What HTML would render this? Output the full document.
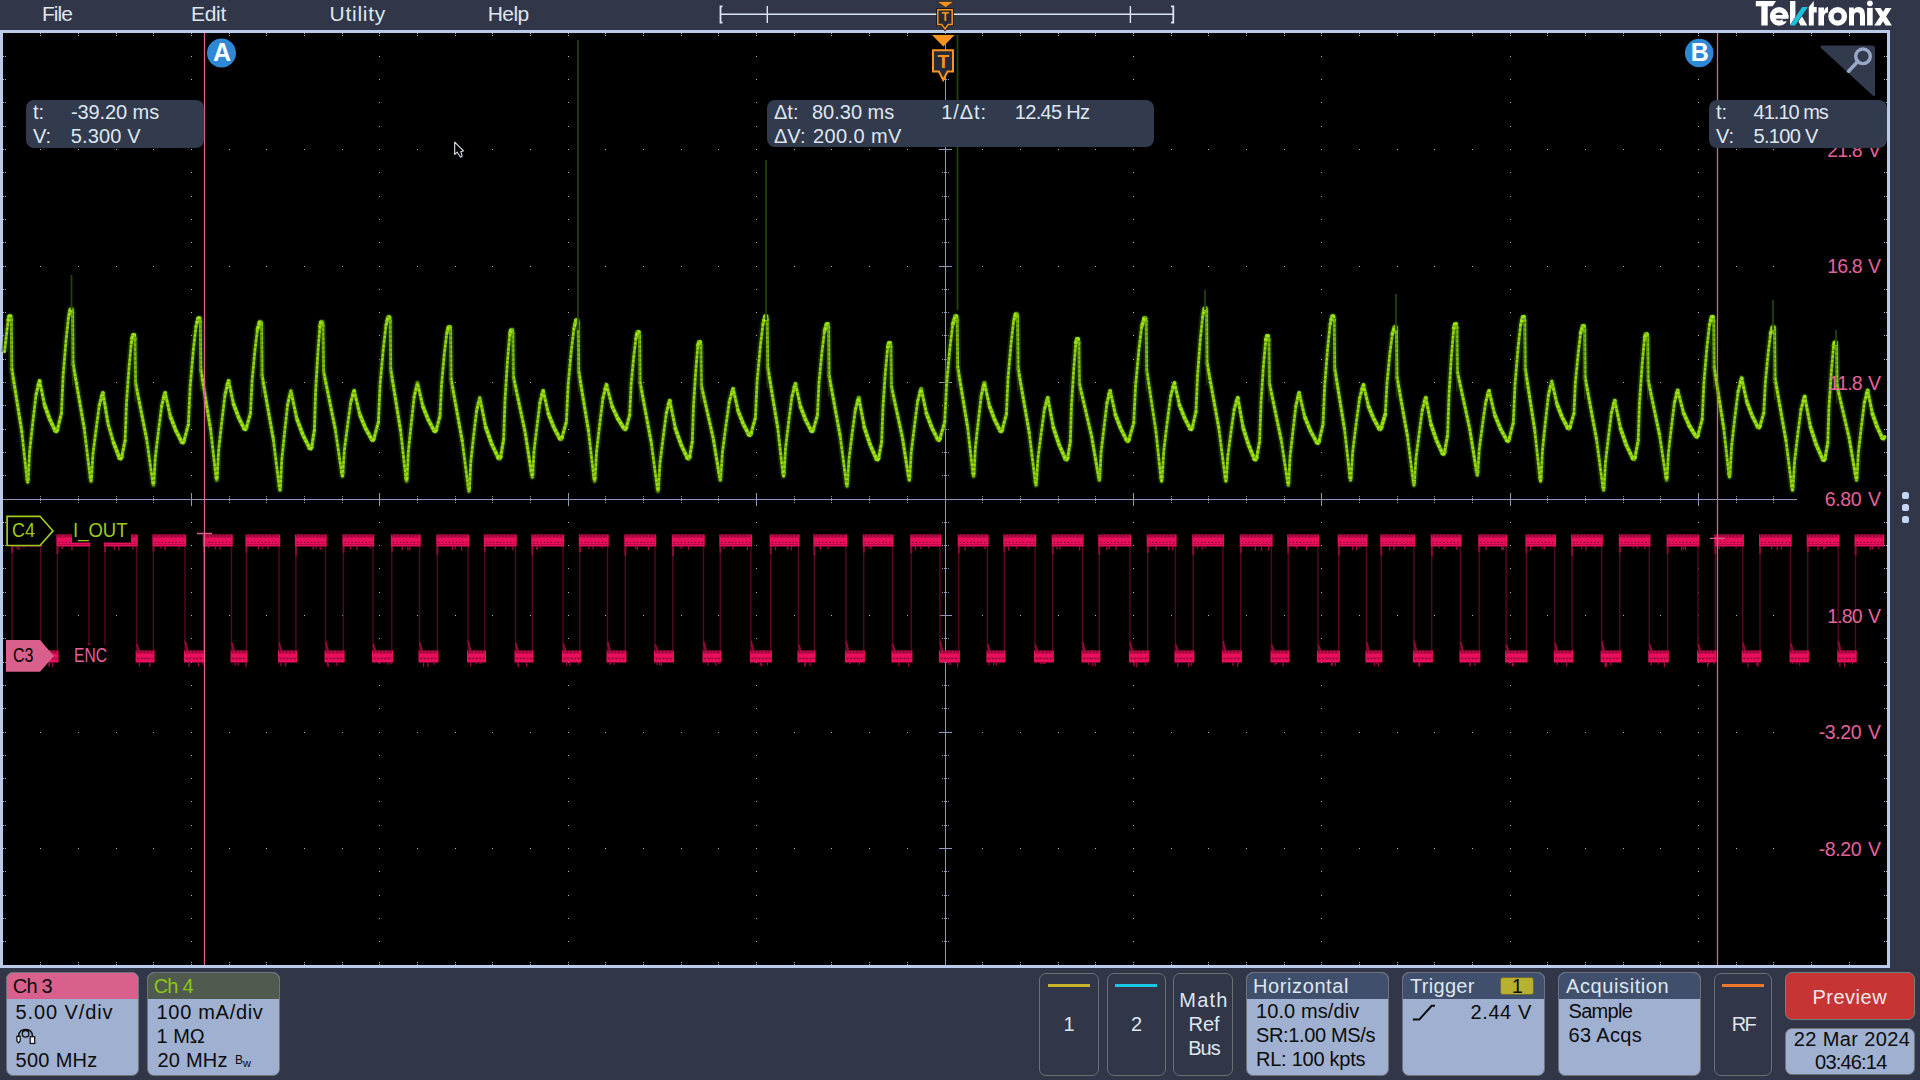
<!DOCTYPE html>
<html><head><meta charset="utf-8">
<style>
html,body{margin:0;padding:0;}
body{width:1920px;height:1080px;overflow:hidden;background:#313748;position:relative;font-family:"Liberation Sans", sans-serif;}
.t{position:absolute;white-space:pre;}
.abs{position:absolute;}
svg{position:absolute;left:0;top:0;}
</style></head><body>
<div class="abs" style="left:0;top:30px;width:1890px;height:938px;background:#b9cbe9;"></div>
<div class="abs" style="left:3px;top:33px;width:1884px;height:932px;background:#000;"></div>
<svg width="1920" height="1080" viewBox="0 0 1920 1080">
<path d="M3 56h1v1h-1zM3 79h1v1h-1zM3 102h1v1h-1zM3 126h1v1h-1zM3 149h1v1h-1zM3 172h1v1h-1zM3 196h1v1h-1zM3 219h1v1h-1zM3 242h1v1h-1zM3 266h1v1h-1zM3 289h1v1h-1zM3 312h1v1h-1zM3 335h1v1h-1zM3 359h1v1h-1zM3 382h1v1h-1zM3 405h1v1h-1zM3 429h1v1h-1zM3 452h1v1h-1zM3 475h1v1h-1zM3 499h1v1h-1zM3 522h1v1h-1zM3 545h1v1h-1zM3 568h1v1h-1zM3 592h1v1h-1zM3 615h1v1h-1zM3 638h1v1h-1zM3 662h1v1h-1zM3 685h1v1h-1zM3 708h1v1h-1zM3 732h1v1h-1zM3 755h1v1h-1zM3 778h1v1h-1zM3 801h1v1h-1zM3 825h1v1h-1zM3 848h1v1h-1zM3 871h1v1h-1zM3 895h1v1h-1zM3 918h1v1h-1zM3 941h1v1h-1zM5 56h1v1h-1zM5 79h1v1h-1zM5 102h1v1h-1zM5 126h1v1h-1zM5 149h1v1h-1zM5 172h1v1h-1zM5 196h1v1h-1zM5 219h1v1h-1zM5 242h1v1h-1zM5 266h1v1h-1zM5 289h1v1h-1zM5 312h1v1h-1zM5 335h1v1h-1zM5 359h1v1h-1zM5 382h1v1h-1zM5 405h1v1h-1zM5 429h1v1h-1zM5 452h1v1h-1zM5 475h1v1h-1zM5 499h1v1h-1zM5 522h1v1h-1zM5 545h1v1h-1zM5 568h1v1h-1zM5 592h1v1h-1zM5 615h1v1h-1zM5 638h1v1h-1zM5 662h1v1h-1zM5 685h1v1h-1zM5 708h1v1h-1zM5 732h1v1h-1zM5 755h1v1h-1zM5 778h1v1h-1zM5 801h1v1h-1zM5 825h1v1h-1zM5 848h1v1h-1zM5 871h1v1h-1zM5 895h1v1h-1zM5 918h1v1h-1zM5 941h1v1h-1zM40 33h1v1h-1zM40 35h1v1h-1zM40 149h1v1h-1zM40 266h1v1h-1zM40 382h1v1h-1zM40 615h1v1h-1zM40 732h1v1h-1zM40 848h1v1h-1zM40 962h1v1h-1zM40 964h1v1h-1zM78 33h1v1h-1zM78 35h1v1h-1zM78 149h1v1h-1zM78 266h1v1h-1zM78 382h1v1h-1zM78 615h1v1h-1zM78 732h1v1h-1zM78 848h1v1h-1zM78 962h1v1h-1zM78 964h1v1h-1zM116 33h1v1h-1zM116 35h1v1h-1zM116 149h1v1h-1zM116 266h1v1h-1zM116 382h1v1h-1zM116 615h1v1h-1zM116 732h1v1h-1zM116 848h1v1h-1zM116 962h1v1h-1zM116 964h1v1h-1zM153 33h1v1h-1zM153 35h1v1h-1zM153 149h1v1h-1zM153 266h1v1h-1zM153 382h1v1h-1zM153 615h1v1h-1zM153 732h1v1h-1zM153 848h1v1h-1zM153 962h1v1h-1zM153 964h1v1h-1zM191 33h1v1h-1zM191 35h1v1h-1zM191 56h1v1h-1zM191 79h1v1h-1zM191 102h1v1h-1zM191 126h1v1h-1zM191 149h1v1h-1zM191 172h1v1h-1zM191 196h1v1h-1zM191 219h1v1h-1zM191 242h1v1h-1zM191 266h1v1h-1zM191 289h1v1h-1zM191 312h1v1h-1zM191 335h1v1h-1zM191 359h1v1h-1zM191 382h1v1h-1zM191 405h1v1h-1zM191 429h1v1h-1zM191 452h1v1h-1zM191 475h1v1h-1zM191 499h1v1h-1zM191 522h1v1h-1zM191 545h1v1h-1zM191 568h1v1h-1zM191 592h1v1h-1zM191 615h1v1h-1zM191 638h1v1h-1zM191 662h1v1h-1zM191 685h1v1h-1zM191 708h1v1h-1zM191 732h1v1h-1zM191 755h1v1h-1zM191 778h1v1h-1zM191 801h1v1h-1zM191 825h1v1h-1zM191 848h1v1h-1zM191 871h1v1h-1zM191 895h1v1h-1zM191 918h1v1h-1zM191 941h1v1h-1zM191 962h1v1h-1zM191 964h1v1h-1zM191 965h1v1h-1zM229 33h1v1h-1zM229 35h1v1h-1zM229 149h1v1h-1zM229 266h1v1h-1zM229 382h1v1h-1zM229 615h1v1h-1zM229 732h1v1h-1zM229 848h1v1h-1zM229 962h1v1h-1zM229 964h1v1h-1zM266 33h1v1h-1zM266 35h1v1h-1zM266 149h1v1h-1zM266 266h1v1h-1zM266 382h1v1h-1zM266 615h1v1h-1zM266 732h1v1h-1zM266 848h1v1h-1zM266 962h1v1h-1zM266 964h1v1h-1zM304 33h1v1h-1zM304 35h1v1h-1zM304 149h1v1h-1zM304 266h1v1h-1zM304 382h1v1h-1zM304 615h1v1h-1zM304 732h1v1h-1zM304 848h1v1h-1zM304 962h1v1h-1zM304 964h1v1h-1zM342 33h1v1h-1zM342 35h1v1h-1zM342 149h1v1h-1zM342 266h1v1h-1zM342 382h1v1h-1zM342 615h1v1h-1zM342 732h1v1h-1zM342 848h1v1h-1zM342 962h1v1h-1zM342 964h1v1h-1zM379 33h1v1h-1zM379 35h1v1h-1zM379 56h1v1h-1zM379 79h1v1h-1zM379 102h1v1h-1zM379 126h1v1h-1zM379 149h1v1h-1zM379 172h1v1h-1zM379 196h1v1h-1zM379 219h1v1h-1zM379 242h1v1h-1zM379 266h1v1h-1zM379 289h1v1h-1zM379 312h1v1h-1zM379 335h1v1h-1zM379 359h1v1h-1zM379 382h1v1h-1zM379 405h1v1h-1zM379 429h1v1h-1zM379 452h1v1h-1zM379 475h1v1h-1zM379 499h1v1h-1zM379 522h1v1h-1zM379 545h1v1h-1zM379 568h1v1h-1zM379 592h1v1h-1zM379 615h1v1h-1zM379 638h1v1h-1zM379 662h1v1h-1zM379 685h1v1h-1zM379 708h1v1h-1zM379 732h1v1h-1zM379 755h1v1h-1zM379 778h1v1h-1zM379 801h1v1h-1zM379 825h1v1h-1zM379 848h1v1h-1zM379 871h1v1h-1zM379 895h1v1h-1zM379 918h1v1h-1zM379 941h1v1h-1zM379 962h1v1h-1zM379 964h1v1h-1zM379 965h1v1h-1zM417 33h1v1h-1zM417 35h1v1h-1zM417 149h1v1h-1zM417 266h1v1h-1zM417 382h1v1h-1zM417 615h1v1h-1zM417 732h1v1h-1zM417 848h1v1h-1zM417 962h1v1h-1zM417 964h1v1h-1zM455 33h1v1h-1zM455 35h1v1h-1zM455 149h1v1h-1zM455 266h1v1h-1zM455 382h1v1h-1zM455 615h1v1h-1zM455 732h1v1h-1zM455 848h1v1h-1zM455 962h1v1h-1zM455 964h1v1h-1zM492 33h1v1h-1zM492 35h1v1h-1zM492 149h1v1h-1zM492 266h1v1h-1zM492 382h1v1h-1zM492 615h1v1h-1zM492 732h1v1h-1zM492 848h1v1h-1zM492 962h1v1h-1zM492 964h1v1h-1zM530 33h1v1h-1zM530 35h1v1h-1zM530 149h1v1h-1zM530 266h1v1h-1zM530 382h1v1h-1zM530 615h1v1h-1zM530 732h1v1h-1zM530 848h1v1h-1zM530 962h1v1h-1zM530 964h1v1h-1zM568 33h1v1h-1zM568 35h1v1h-1zM568 56h1v1h-1zM568 79h1v1h-1zM568 102h1v1h-1zM568 126h1v1h-1zM568 149h1v1h-1zM568 172h1v1h-1zM568 196h1v1h-1zM568 219h1v1h-1zM568 242h1v1h-1zM568 266h1v1h-1zM568 289h1v1h-1zM568 312h1v1h-1zM568 335h1v1h-1zM568 359h1v1h-1zM568 382h1v1h-1zM568 405h1v1h-1zM568 429h1v1h-1zM568 452h1v1h-1zM568 475h1v1h-1zM568 499h1v1h-1zM568 522h1v1h-1zM568 545h1v1h-1zM568 568h1v1h-1zM568 592h1v1h-1zM568 615h1v1h-1zM568 638h1v1h-1zM568 662h1v1h-1zM568 685h1v1h-1zM568 708h1v1h-1zM568 732h1v1h-1zM568 755h1v1h-1zM568 778h1v1h-1zM568 801h1v1h-1zM568 825h1v1h-1zM568 848h1v1h-1zM568 871h1v1h-1zM568 895h1v1h-1zM568 918h1v1h-1zM568 941h1v1h-1zM568 962h1v1h-1zM568 964h1v1h-1zM568 965h1v1h-1zM605 33h1v1h-1zM605 35h1v1h-1zM605 149h1v1h-1zM605 266h1v1h-1zM605 382h1v1h-1zM605 615h1v1h-1zM605 732h1v1h-1zM605 848h1v1h-1zM605 962h1v1h-1zM605 964h1v1h-1zM643 33h1v1h-1zM643 35h1v1h-1zM643 149h1v1h-1zM643 266h1v1h-1zM643 382h1v1h-1zM643 615h1v1h-1zM643 732h1v1h-1zM643 848h1v1h-1zM643 962h1v1h-1zM643 964h1v1h-1zM681 33h1v1h-1zM681 35h1v1h-1zM681 149h1v1h-1zM681 266h1v1h-1zM681 382h1v1h-1zM681 615h1v1h-1zM681 732h1v1h-1zM681 848h1v1h-1zM681 962h1v1h-1zM681 964h1v1h-1zM718 33h1v1h-1zM718 35h1v1h-1zM718 149h1v1h-1zM718 266h1v1h-1zM718 382h1v1h-1zM718 615h1v1h-1zM718 732h1v1h-1zM718 848h1v1h-1zM718 962h1v1h-1zM718 964h1v1h-1zM756 33h1v1h-1zM756 35h1v1h-1zM756 56h1v1h-1zM756 79h1v1h-1zM756 102h1v1h-1zM756 126h1v1h-1zM756 149h1v1h-1zM756 172h1v1h-1zM756 196h1v1h-1zM756 219h1v1h-1zM756 242h1v1h-1zM756 266h1v1h-1zM756 289h1v1h-1zM756 312h1v1h-1zM756 335h1v1h-1zM756 359h1v1h-1zM756 382h1v1h-1zM756 405h1v1h-1zM756 429h1v1h-1zM756 452h1v1h-1zM756 475h1v1h-1zM756 499h1v1h-1zM756 522h1v1h-1zM756 545h1v1h-1zM756 568h1v1h-1zM756 592h1v1h-1zM756 615h1v1h-1zM756 638h1v1h-1zM756 662h1v1h-1zM756 685h1v1h-1zM756 708h1v1h-1zM756 732h1v1h-1zM756 755h1v1h-1zM756 778h1v1h-1zM756 801h1v1h-1zM756 825h1v1h-1zM756 848h1v1h-1zM756 871h1v1h-1zM756 895h1v1h-1zM756 918h1v1h-1zM756 941h1v1h-1zM756 962h1v1h-1zM756 964h1v1h-1zM756 965h1v1h-1zM794 33h1v1h-1zM794 35h1v1h-1zM794 149h1v1h-1zM794 266h1v1h-1zM794 382h1v1h-1zM794 615h1v1h-1zM794 732h1v1h-1zM794 848h1v1h-1zM794 962h1v1h-1zM794 964h1v1h-1zM831 33h1v1h-1zM831 35h1v1h-1zM831 149h1v1h-1zM831 266h1v1h-1zM831 382h1v1h-1zM831 615h1v1h-1zM831 732h1v1h-1zM831 848h1v1h-1zM831 962h1v1h-1zM831 964h1v1h-1zM869 33h1v1h-1zM869 35h1v1h-1zM869 149h1v1h-1zM869 266h1v1h-1zM869 382h1v1h-1zM869 615h1v1h-1zM869 732h1v1h-1zM869 848h1v1h-1zM869 962h1v1h-1zM869 964h1v1h-1zM907 33h1v1h-1zM907 35h1v1h-1zM907 149h1v1h-1zM907 266h1v1h-1zM907 382h1v1h-1zM907 615h1v1h-1zM907 732h1v1h-1zM907 848h1v1h-1zM907 962h1v1h-1zM907 964h1v1h-1zM945 33h1v1h-1zM945 35h1v1h-1zM945 149h1v1h-1zM945 266h1v1h-1zM945 382h1v1h-1zM945 615h1v1h-1zM945 732h1v1h-1zM945 848h1v1h-1zM945 962h1v1h-1zM945 964h1v1h-1zM982 33h1v1h-1zM982 35h1v1h-1zM982 149h1v1h-1zM982 266h1v1h-1zM982 382h1v1h-1zM982 615h1v1h-1zM982 732h1v1h-1zM982 848h1v1h-1zM982 962h1v1h-1zM982 964h1v1h-1zM1020 33h1v1h-1zM1020 35h1v1h-1zM1020 149h1v1h-1zM1020 266h1v1h-1zM1020 382h1v1h-1zM1020 615h1v1h-1zM1020 732h1v1h-1zM1020 848h1v1h-1zM1020 962h1v1h-1zM1020 964h1v1h-1zM1058 33h1v1h-1zM1058 35h1v1h-1zM1058 149h1v1h-1zM1058 266h1v1h-1zM1058 382h1v1h-1zM1058 615h1v1h-1zM1058 732h1v1h-1zM1058 848h1v1h-1zM1058 962h1v1h-1zM1058 964h1v1h-1zM1095 33h1v1h-1zM1095 35h1v1h-1zM1095 149h1v1h-1zM1095 266h1v1h-1zM1095 382h1v1h-1zM1095 615h1v1h-1zM1095 732h1v1h-1zM1095 848h1v1h-1zM1095 962h1v1h-1zM1095 964h1v1h-1zM1133 33h1v1h-1zM1133 35h1v1h-1zM1133 56h1v1h-1zM1133 79h1v1h-1zM1133 102h1v1h-1zM1133 126h1v1h-1zM1133 149h1v1h-1zM1133 172h1v1h-1zM1133 196h1v1h-1zM1133 219h1v1h-1zM1133 242h1v1h-1zM1133 266h1v1h-1zM1133 289h1v1h-1zM1133 312h1v1h-1zM1133 335h1v1h-1zM1133 359h1v1h-1zM1133 382h1v1h-1zM1133 405h1v1h-1zM1133 429h1v1h-1zM1133 452h1v1h-1zM1133 475h1v1h-1zM1133 499h1v1h-1zM1133 522h1v1h-1zM1133 545h1v1h-1zM1133 568h1v1h-1zM1133 592h1v1h-1zM1133 615h1v1h-1zM1133 638h1v1h-1zM1133 662h1v1h-1zM1133 685h1v1h-1zM1133 708h1v1h-1zM1133 732h1v1h-1zM1133 755h1v1h-1zM1133 778h1v1h-1zM1133 801h1v1h-1zM1133 825h1v1h-1zM1133 848h1v1h-1zM1133 871h1v1h-1zM1133 895h1v1h-1zM1133 918h1v1h-1zM1133 941h1v1h-1zM1133 962h1v1h-1zM1133 964h1v1h-1zM1133 965h1v1h-1zM1171 33h1v1h-1zM1171 35h1v1h-1zM1171 149h1v1h-1zM1171 266h1v1h-1zM1171 382h1v1h-1zM1171 615h1v1h-1zM1171 732h1v1h-1zM1171 848h1v1h-1zM1171 962h1v1h-1zM1171 964h1v1h-1zM1208 33h1v1h-1zM1208 35h1v1h-1zM1208 149h1v1h-1zM1208 266h1v1h-1zM1208 382h1v1h-1zM1208 615h1v1h-1zM1208 732h1v1h-1zM1208 848h1v1h-1zM1208 962h1v1h-1zM1208 964h1v1h-1zM1246 33h1v1h-1zM1246 35h1v1h-1zM1246 149h1v1h-1zM1246 266h1v1h-1zM1246 382h1v1h-1zM1246 615h1v1h-1zM1246 732h1v1h-1zM1246 848h1v1h-1zM1246 962h1v1h-1zM1246 964h1v1h-1zM1284 33h1v1h-1zM1284 35h1v1h-1zM1284 149h1v1h-1zM1284 266h1v1h-1zM1284 382h1v1h-1zM1284 615h1v1h-1zM1284 732h1v1h-1zM1284 848h1v1h-1zM1284 962h1v1h-1zM1284 964h1v1h-1zM1321 33h1v1h-1zM1321 35h1v1h-1zM1321 56h1v1h-1zM1321 79h1v1h-1zM1321 102h1v1h-1zM1321 126h1v1h-1zM1321 149h1v1h-1zM1321 172h1v1h-1zM1321 196h1v1h-1zM1321 219h1v1h-1zM1321 242h1v1h-1zM1321 266h1v1h-1zM1321 289h1v1h-1zM1321 312h1v1h-1zM1321 335h1v1h-1zM1321 359h1v1h-1zM1321 382h1v1h-1zM1321 405h1v1h-1zM1321 429h1v1h-1zM1321 452h1v1h-1zM1321 475h1v1h-1zM1321 499h1v1h-1zM1321 522h1v1h-1zM1321 545h1v1h-1zM1321 568h1v1h-1zM1321 592h1v1h-1zM1321 615h1v1h-1zM1321 638h1v1h-1zM1321 662h1v1h-1zM1321 685h1v1h-1zM1321 708h1v1h-1zM1321 732h1v1h-1zM1321 755h1v1h-1zM1321 778h1v1h-1zM1321 801h1v1h-1zM1321 825h1v1h-1zM1321 848h1v1h-1zM1321 871h1v1h-1zM1321 895h1v1h-1zM1321 918h1v1h-1zM1321 941h1v1h-1zM1321 962h1v1h-1zM1321 964h1v1h-1zM1321 965h1v1h-1zM1359 33h1v1h-1zM1359 35h1v1h-1zM1359 149h1v1h-1zM1359 266h1v1h-1zM1359 382h1v1h-1zM1359 615h1v1h-1zM1359 732h1v1h-1zM1359 848h1v1h-1zM1359 962h1v1h-1zM1359 964h1v1h-1zM1397 33h1v1h-1zM1397 35h1v1h-1zM1397 149h1v1h-1zM1397 266h1v1h-1zM1397 382h1v1h-1zM1397 615h1v1h-1zM1397 732h1v1h-1zM1397 848h1v1h-1zM1397 962h1v1h-1zM1397 964h1v1h-1zM1434 33h1v1h-1zM1434 35h1v1h-1zM1434 149h1v1h-1zM1434 266h1v1h-1zM1434 382h1v1h-1zM1434 615h1v1h-1zM1434 732h1v1h-1zM1434 848h1v1h-1zM1434 962h1v1h-1zM1434 964h1v1h-1zM1472 33h1v1h-1zM1472 35h1v1h-1zM1472 149h1v1h-1zM1472 266h1v1h-1zM1472 382h1v1h-1zM1472 615h1v1h-1zM1472 732h1v1h-1zM1472 848h1v1h-1zM1472 962h1v1h-1zM1472 964h1v1h-1zM1510 33h1v1h-1zM1510 35h1v1h-1zM1510 56h1v1h-1zM1510 79h1v1h-1zM1510 102h1v1h-1zM1510 126h1v1h-1zM1510 149h1v1h-1zM1510 172h1v1h-1zM1510 196h1v1h-1zM1510 219h1v1h-1zM1510 242h1v1h-1zM1510 266h1v1h-1zM1510 289h1v1h-1zM1510 312h1v1h-1zM1510 335h1v1h-1zM1510 359h1v1h-1zM1510 382h1v1h-1zM1510 405h1v1h-1zM1510 429h1v1h-1zM1510 452h1v1h-1zM1510 475h1v1h-1zM1510 499h1v1h-1zM1510 522h1v1h-1zM1510 545h1v1h-1zM1510 568h1v1h-1zM1510 592h1v1h-1zM1510 615h1v1h-1zM1510 638h1v1h-1zM1510 662h1v1h-1zM1510 685h1v1h-1zM1510 708h1v1h-1zM1510 732h1v1h-1zM1510 755h1v1h-1zM1510 778h1v1h-1zM1510 801h1v1h-1zM1510 825h1v1h-1zM1510 848h1v1h-1zM1510 871h1v1h-1zM1510 895h1v1h-1zM1510 918h1v1h-1zM1510 941h1v1h-1zM1510 962h1v1h-1zM1510 964h1v1h-1zM1510 965h1v1h-1zM1547 33h1v1h-1zM1547 35h1v1h-1zM1547 149h1v1h-1zM1547 266h1v1h-1zM1547 382h1v1h-1zM1547 615h1v1h-1zM1547 732h1v1h-1zM1547 848h1v1h-1zM1547 962h1v1h-1zM1547 964h1v1h-1zM1585 33h1v1h-1zM1585 35h1v1h-1zM1585 149h1v1h-1zM1585 266h1v1h-1zM1585 382h1v1h-1zM1585 615h1v1h-1zM1585 732h1v1h-1zM1585 848h1v1h-1zM1585 962h1v1h-1zM1585 964h1v1h-1zM1623 33h1v1h-1zM1623 35h1v1h-1zM1623 149h1v1h-1zM1623 266h1v1h-1zM1623 382h1v1h-1zM1623 615h1v1h-1zM1623 732h1v1h-1zM1623 848h1v1h-1zM1623 962h1v1h-1zM1623 964h1v1h-1zM1660 33h1v1h-1zM1660 35h1v1h-1zM1660 149h1v1h-1zM1660 266h1v1h-1zM1660 382h1v1h-1zM1660 615h1v1h-1zM1660 732h1v1h-1zM1660 848h1v1h-1zM1660 962h1v1h-1zM1660 964h1v1h-1zM1698 33h1v1h-1zM1698 35h1v1h-1zM1698 56h1v1h-1zM1698 79h1v1h-1zM1698 102h1v1h-1zM1698 126h1v1h-1zM1698 149h1v1h-1zM1698 172h1v1h-1zM1698 196h1v1h-1zM1698 219h1v1h-1zM1698 242h1v1h-1zM1698 266h1v1h-1zM1698 289h1v1h-1zM1698 312h1v1h-1zM1698 335h1v1h-1zM1698 359h1v1h-1zM1698 382h1v1h-1zM1698 405h1v1h-1zM1698 429h1v1h-1zM1698 452h1v1h-1zM1698 475h1v1h-1zM1698 499h1v1h-1zM1698 522h1v1h-1zM1698 545h1v1h-1zM1698 568h1v1h-1zM1698 592h1v1h-1zM1698 615h1v1h-1zM1698 638h1v1h-1zM1698 662h1v1h-1zM1698 685h1v1h-1zM1698 708h1v1h-1zM1698 732h1v1h-1zM1698 755h1v1h-1zM1698 778h1v1h-1zM1698 801h1v1h-1zM1698 825h1v1h-1zM1698 848h1v1h-1zM1698 871h1v1h-1zM1698 895h1v1h-1zM1698 918h1v1h-1zM1698 941h1v1h-1zM1698 962h1v1h-1zM1698 964h1v1h-1zM1698 965h1v1h-1zM1736 33h1v1h-1zM1736 35h1v1h-1zM1736 149h1v1h-1zM1736 266h1v1h-1zM1736 382h1v1h-1zM1736 615h1v1h-1zM1736 732h1v1h-1zM1736 848h1v1h-1zM1736 962h1v1h-1zM1736 964h1v1h-1zM1773 33h1v1h-1zM1773 35h1v1h-1zM1773 149h1v1h-1zM1773 266h1v1h-1zM1773 382h1v1h-1zM1773 615h1v1h-1zM1773 732h1v1h-1zM1773 848h1v1h-1zM1773 962h1v1h-1zM1773 964h1v1h-1zM1811 33h1v1h-1zM1811 35h1v1h-1zM1811 149h1v1h-1zM1811 266h1v1h-1zM1811 382h1v1h-1zM1811 615h1v1h-1zM1811 732h1v1h-1zM1811 848h1v1h-1zM1811 962h1v1h-1zM1811 964h1v1h-1zM1849 33h1v1h-1zM1849 35h1v1h-1zM1849 149h1v1h-1zM1849 266h1v1h-1zM1849 382h1v1h-1zM1849 615h1v1h-1zM1849 732h1v1h-1zM1849 848h1v1h-1zM1849 962h1v1h-1zM1849 964h1v1h-1zM1884 56h1v1h-1zM1884 79h1v1h-1zM1884 102h1v1h-1zM1884 126h1v1h-1zM1884 149h1v1h-1zM1884 172h1v1h-1zM1884 196h1v1h-1zM1884 219h1v1h-1zM1884 242h1v1h-1zM1884 266h1v1h-1zM1884 289h1v1h-1zM1884 312h1v1h-1zM1884 335h1v1h-1zM1884 359h1v1h-1zM1884 382h1v1h-1zM1884 405h1v1h-1zM1884 429h1v1h-1zM1884 452h1v1h-1zM1884 475h1v1h-1zM1884 499h1v1h-1zM1884 522h1v1h-1zM1884 545h1v1h-1zM1884 568h1v1h-1zM1884 592h1v1h-1zM1884 615h1v1h-1zM1884 638h1v1h-1zM1884 662h1v1h-1zM1884 685h1v1h-1zM1884 708h1v1h-1zM1884 732h1v1h-1zM1884 755h1v1h-1zM1884 778h1v1h-1zM1884 801h1v1h-1zM1884 825h1v1h-1zM1884 848h1v1h-1zM1884 871h1v1h-1zM1884 895h1v1h-1zM1884 918h1v1h-1zM1884 941h1v1h-1zM1886 56h1v1h-1zM1886 79h1v1h-1zM1886 102h1v1h-1zM1886 126h1v1h-1zM1886 149h1v1h-1zM1886 172h1v1h-1zM1886 196h1v1h-1zM1886 219h1v1h-1zM1886 242h1v1h-1zM1886 266h1v1h-1zM1886 289h1v1h-1zM1886 312h1v1h-1zM1886 335h1v1h-1zM1886 359h1v1h-1zM1886 382h1v1h-1zM1886 405h1v1h-1zM1886 429h1v1h-1zM1886 452h1v1h-1zM1886 475h1v1h-1zM1886 499h1v1h-1zM1886 522h1v1h-1zM1886 545h1v1h-1zM1886 568h1v1h-1zM1886 592h1v1h-1zM1886 615h1v1h-1zM1886 638h1v1h-1zM1886 662h1v1h-1zM1886 685h1v1h-1zM1886 708h1v1h-1zM1886 732h1v1h-1zM1886 755h1v1h-1zM1886 778h1v1h-1zM1886 801h1v1h-1zM1886 825h1v1h-1zM1886 848h1v1h-1zM1886 871h1v1h-1zM1886 895h1v1h-1zM1886 918h1v1h-1zM1886 941h1v1h-1zM1887 149h1v1h-1zM1887 266h1v1h-1zM1887 382h1v1h-1zM1887 615h1v1h-1zM1887 732h1v1h-1zM1887 848h1v1h-1z" fill="#a8b2ce" shape-rendering="crispEdges"/>
<path d="M3 499H1887v1H3z M945 36h1V965h-1z M40 496h1v1h-1z M40 502h1v1h-1z M40 498h1v3h-1z M78 496h1v1h-1z M78 502h1v1h-1z M78 498h1v3h-1z M116 496h1v1h-1z M116 502h1v1h-1z M116 498h1v3h-1z M153 496h1v1h-1z M153 502h1v1h-1z M153 498h1v3h-1z M191 493h1v13h-1z M229 496h1v1h-1z M229 502h1v1h-1z M229 498h1v3h-1z M266 496h1v1h-1z M266 502h1v1h-1z M266 498h1v3h-1z M304 496h1v1h-1z M304 502h1v1h-1z M304 498h1v3h-1z M342 496h1v1h-1z M342 502h1v1h-1z M342 498h1v3h-1z M379 493h1v13h-1z M417 496h1v1h-1z M417 502h1v1h-1z M417 498h1v3h-1z M455 496h1v1h-1z M455 502h1v1h-1z M455 498h1v3h-1z M492 496h1v1h-1z M492 502h1v1h-1z M492 498h1v3h-1z M530 496h1v1h-1z M530 502h1v1h-1z M530 498h1v3h-1z M568 493h1v13h-1z M605 496h1v1h-1z M605 502h1v1h-1z M605 498h1v3h-1z M643 496h1v1h-1z M643 502h1v1h-1z M643 498h1v3h-1z M681 496h1v1h-1z M681 502h1v1h-1z M681 498h1v3h-1z M718 496h1v1h-1z M718 502h1v1h-1z M718 498h1v3h-1z M756 493h1v13h-1z M794 496h1v1h-1z M794 502h1v1h-1z M794 498h1v3h-1z M831 496h1v1h-1z M831 502h1v1h-1z M831 498h1v3h-1z M869 496h1v1h-1z M869 502h1v1h-1z M869 498h1v3h-1z M907 496h1v1h-1z M907 502h1v1h-1z M907 498h1v3h-1z M982 496h1v1h-1z M982 502h1v1h-1z M982 498h1v3h-1z M1020 496h1v1h-1z M1020 502h1v1h-1z M1020 498h1v3h-1z M1058 496h1v1h-1z M1058 502h1v1h-1z M1058 498h1v3h-1z M1095 496h1v1h-1z M1095 502h1v1h-1z M1095 498h1v3h-1z M1133 493h1v13h-1z M1171 496h1v1h-1z M1171 502h1v1h-1z M1171 498h1v3h-1z M1208 496h1v1h-1z M1208 502h1v1h-1z M1208 498h1v3h-1z M1246 496h1v1h-1z M1246 502h1v1h-1z M1246 498h1v3h-1z M1284 496h1v1h-1z M1284 502h1v1h-1z M1284 498h1v3h-1z M1321 493h1v13h-1z M1359 496h1v1h-1z M1359 502h1v1h-1z M1359 498h1v3h-1z M1397 496h1v1h-1z M1397 502h1v1h-1z M1397 498h1v3h-1z M1434 496h1v1h-1z M1434 502h1v1h-1z M1434 498h1v3h-1z M1472 496h1v1h-1z M1472 502h1v1h-1z M1472 498h1v3h-1z M1510 493h1v13h-1z M1547 496h1v1h-1z M1547 502h1v1h-1z M1547 498h1v3h-1z M1585 496h1v1h-1z M1585 502h1v1h-1z M1585 498h1v3h-1z M1623 496h1v1h-1z M1623 502h1v1h-1z M1623 498h1v3h-1z M1660 496h1v1h-1z M1660 502h1v1h-1z M1660 498h1v3h-1z M1698 493h1v13h-1z M1736 496h1v1h-1z M1736 502h1v1h-1z M1736 498h1v3h-1z M1773 496h1v1h-1z M1773 502h1v1h-1z M1773 498h1v3h-1z M1811 496h1v1h-1z M1811 502h1v1h-1z M1811 498h1v3h-1z M1849 496h1v1h-1z M1849 502h1v1h-1z M1849 498h1v3h-1z M942 56h1v1h-1z M948 56h1v1h-1z M944 56h3v1h-3z M942 79h1v1h-1z M948 79h1v1h-1z M944 79h3v1h-3z M942 102h1v1h-1z M948 102h1v1h-1z M944 102h3v1h-3z M942 126h1v1h-1z M948 126h1v1h-1z M944 126h3v1h-3z M939 149h13v1h-13z M942 172h1v1h-1z M948 172h1v1h-1z M944 172h3v1h-3z M942 196h1v1h-1z M948 196h1v1h-1z M944 196h3v1h-3z M942 219h1v1h-1z M948 219h1v1h-1z M944 219h3v1h-3z M942 242h1v1h-1z M948 242h1v1h-1z M944 242h3v1h-3z M939 266h13v1h-13z M942 289h1v1h-1z M948 289h1v1h-1z M944 289h3v1h-3z M942 312h1v1h-1z M948 312h1v1h-1z M944 312h3v1h-3z M942 335h1v1h-1z M948 335h1v1h-1z M944 335h3v1h-3z M942 359h1v1h-1z M948 359h1v1h-1z M944 359h3v1h-3z M939 382h13v1h-13z M942 405h1v1h-1z M948 405h1v1h-1z M944 405h3v1h-3z M942 429h1v1h-1z M948 429h1v1h-1z M944 429h3v1h-3z M942 452h1v1h-1z M948 452h1v1h-1z M944 452h3v1h-3z M942 475h1v1h-1z M948 475h1v1h-1z M944 475h3v1h-3z M942 522h1v1h-1z M948 522h1v1h-1z M944 522h3v1h-3z M942 545h1v1h-1z M948 545h1v1h-1z M944 545h3v1h-3z M942 568h1v1h-1z M948 568h1v1h-1z M944 568h3v1h-3z M942 592h1v1h-1z M948 592h1v1h-1z M944 592h3v1h-3z M939 615h13v1h-13z M942 638h1v1h-1z M948 638h1v1h-1z M944 638h3v1h-3z M942 662h1v1h-1z M948 662h1v1h-1z M944 662h3v1h-3z M942 685h1v1h-1z M948 685h1v1h-1z M944 685h3v1h-3z M942 708h1v1h-1z M948 708h1v1h-1z M944 708h3v1h-3z M939 732h13v1h-13z M942 755h1v1h-1z M948 755h1v1h-1z M944 755h3v1h-3z M942 778h1v1h-1z M948 778h1v1h-1z M944 778h3v1h-3z M942 801h1v1h-1z M948 801h1v1h-1z M944 801h3v1h-3z M942 825h1v1h-1z M948 825h1v1h-1z M944 825h3v1h-3z M939 848h13v1h-13z M942 871h1v1h-1z M948 871h1v1h-1z M944 871h3v1h-3z M942 895h1v1h-1z M948 895h1v1h-1z M944 895h3v1h-3z M942 918h1v1h-1z M948 918h1v1h-1z M944 918h3v1h-3z M942 941h1v1h-1z M948 941h1v1h-1z M944 941h3v1h-3z " fill="#8c98b8" shape-rendering="crispEdges"/>
<path d="M1797 138.2H1887V162.2H1797z M1797 254.7H1887V278.7H1797z M1797 371.2H1887V395.2H1797z M1797 487.7H1887V511.7H1797z M1797 604.2H1887V628.2H1797z M1797 720.7H1887V744.7H1797z M1797 837.2H1887V861.2H1797z " fill="#000"/>
<path d="M4.5 352.0 L7.0 330.0 L8.3 319.7 L9.3 316.5 L10.5 316.2 L11.3 319.7 L11.4 332.3 L11.8 368.9 L21.7 431.1 L27.0 479.0 L27.7 482.0 L28.2 479.0 L29.6 451.7 L32.7 423.4 L36.0 395.1 L38.4 385.0 L39.6 381.0 L44.6 405.0 L49.7 419.1 L55.2 430.6 L56.4 431.1 L57.4 429.6 L61.4 413.4 L63.1 376.1 L66.0 340.6 L68.5 317.4 L69.6 312.8 L70.6 309.6 L71.8 309.3 L72.6 312.8 L72.7 326.0 L73.1 363.9 L84.2 428.3 L90.3 478.0 L91.0 481.0 L91.5 478.0 L92.9 454.6 L96.0 430.0 L99.3 405.3 L101.7 396.5 L102.9 393.0 L108.2 424.4 L113.6 442.8 L119.5 458.0 L120.7 458.5 L121.7 457.0 L125.1 440.5 L126.5 402.7 L129.1 366.7 L131.3 343.2 L132.0 338.5 L133.0 335.3 L134.2 335.0 L135.0 338.5 L135.1 349.6 L135.5 382.7 L146.6 438.9 L152.7 482.0 L153.4 485.0 L153.9 482.0 L155.3 457.4 L158.4 431.6 L161.7 405.9 L164.0 396.7 L165.2 393.0 L170.5 416.8 L175.9 430.6 L181.8 442.0 L183.0 442.5 L184.0 441.0 L188.4 424.4 L190.2 386.3 L193.3 350.1 L196.0 326.4 L197.3 321.7 L198.3 318.5 L199.5 318.2 L200.3 321.7 L200.4 333.9 L200.8 369.6 L210.7 430.3 L216.0 477.0 L216.7 480.0 L217.2 477.0 L218.6 450.3 L221.7 422.6 L225.0 394.9 L227.4 385.0 L228.6 381.0 L233.6 404.1 L238.7 417.6 L244.2 428.6 L245.4 429.1 L246.4 427.6 L250.4 413.5 L252.1 380.8 L255.0 349.6 L257.5 329.2 L258.6 325.7 L259.6 322.5 L260.8 322.2 L261.6 325.7 L261.7 338.5 L262.1 375.6 L273.2 438.5 L279.3 487.0 L280.0 490.0 L280.5 487.0 L281.7 460.3 L284.6 432.6 L287.6 404.9 L289.8 395.0 L290.9 391.0 L296.8 418.6 L302.8 434.7 L309.5 448.0 L310.7 448.5 L311.7 447.0 L314.4 430.1 L315.6 391.4 L317.8 354.7 L319.6 330.6 L320.0 325.7 L321.0 322.5 L322.2 322.2 L323.0 325.7 L323.1 337.1 L323.5 371.1 L335.2 428.8 L341.7 473.0 L342.4 476.0 L342.9 473.0 L344.3 450.5 L347.4 426.7 L350.7 402.9 L353.0 394.4 L354.2 391.0 L359.8 414.5 L365.5 428.2 L371.8 439.5 L373.0 440.0 L374.0 438.5 L378.4 422.1 L380.1 384.5 L383.3 348.8 L386.0 325.3 L387.2 320.7 L388.2 317.5 L389.4 317.2 L390.2 320.7 L390.3 333.1 L390.7 369.3 L400.6 430.7 L405.9 478.0 L406.6 481.0 L407.1 478.0 L408.3 451.6 L411.2 424.2 L414.2 396.7 L416.4 386.9 L417.5 383.0 L422.8 406.1 L428.2 419.6 L434.1 430.6 L435.3 431.1 L436.3 429.6 L440.0 415.9 L441.6 384.1 L444.3 353.8 L446.7 333.9 L447.6 330.6 L448.6 327.4 L449.8 327.1 L450.6 330.6 L450.7 343.0 L451.1 379.2 L462.2 440.7 L468.3 488.0 L469.0 491.0 L469.5 488.0 L470.7 463.1 L473.5 437.0 L476.6 410.9 L478.7 401.6 L479.8 397.9 L485.7 427.0 L491.7 444.0 L498.4 458.0 L499.6 458.5 L500.6 457.0 L503.6 439.8 L505.0 400.5 L507.3 363.1 L509.4 338.6 L509.9 333.6 L510.9 330.4 L512.1 330.1 L512.9 333.6 L513.0 344.3 L513.4 376.8 L525.1 431.9 L531.6 474.0 L532.3 477.0 L532.8 474.0 L534.0 451.2 L536.9 427.1 L539.9 403.0 L542.1 394.4 L543.2 391.0 L548.5 414.0 L553.9 427.5 L559.8 438.5 L561.0 439.0 L562.0 437.5 L566.4 421.7 L568.1 385.3 L571.3 350.7 L574.0 328.1 L575.2 323.7 L576.2 320.5 L577.4 320.2 L578.2 323.7 L578.3 335.8 L578.7 371.3 L588.6 431.6 L593.9 478.0 L594.6 481.0 L595.1 478.0 L596.5 452.2 L599.6 425.3 L602.9 398.4 L605.3 388.8 L606.5 385.0 L612.1 406.2 L617.8 418.5 L624.1 428.6 L625.3 429.1 L626.3 427.6 L629.7 415.0 L631.1 385.2 L633.7 357.0 L635.9 338.4 L636.6 335.6 L637.6 332.4 L638.8 332.1 L639.6 335.6 L639.7 347.5 L640.1 382.6 L651.2 442.2 L657.3 488.0 L658.0 491.0 L658.5 488.0 L659.9 463.9 L663.0 438.7 L666.3 413.4 L668.6 404.4 L669.8 400.8 L675.4 428.5 L681.1 444.7 L687.4 458.0 L688.6 458.5 L689.6 457.0 L692.3 441.5 L693.5 405.9 L695.7 371.9 L697.5 349.7 L697.9 345.5 L698.9 342.3 L700.1 342.0 L700.9 345.5 L701.0 355.4 L701.4 385.8 L713.1 437.6 L719.6 477.0 L720.3 480.0 L720.8 477.0 L722.4 452.7 L725.7 427.2 L729.3 401.7 L731.9 392.6 L733.2 389.0 L738.2 411.1 L743.3 424.0 L748.8 434.5 L750.0 435.0 L751.0 433.5 L755.4 417.7 L757.1 381.3 L760.3 346.7 L763.0 324.1 L764.2 319.7 L765.2 316.5 L766.4 316.2 L767.2 319.7 L767.3 331.7 L767.7 367.0 L777.6 426.9 L782.9 473.0 L783.6 476.0 L784.1 473.0 L785.5 448.4 L788.6 422.6 L791.9 396.9 L794.3 387.7 L795.5 384.0 L800.5 406.6 L805.6 419.8 L811.1 430.6 L812.3 431.1 L813.3 429.6 L817.4 415.5 L819.0 382.7 L822.0 351.6 L824.5 331.1 L825.6 327.6 L826.6 324.4 L827.8 324.1 L828.6 327.6 L828.7 339.8 L829.1 375.6 L840.2 436.3 L846.3 483.0 L847.0 486.0 L847.5 483.0 L848.9 459.6 L852.0 434.9 L855.3 410.2 L857.6 401.4 L858.8 397.9 L864.4 427.5 L870.1 444.7 L876.4 459.0 L877.6 459.5 L878.6 458.0 L881.6 442.5 L883.0 406.9 L885.3 372.9 L887.4 350.7 L887.9 346.5 L888.9 343.3 L890.1 343.0 L890.9 346.5 L891.0 356.2 L891.4 386.5 L902.5 437.9 L908.6 477.0 L909.3 480.0 L909.8 477.0 L911.2 452.7 L914.3 427.2 L917.6 401.7 L920.0 392.6 L921.2 389.0 L926.5 413.5 L931.9 427.8 L937.8 439.5 L939.0 440.0 L940.0 438.5 L944.7 422.0 L946.6 384.1 L949.9 348.0 L952.8 324.4 L954.2 319.7 L955.2 316.5 L956.4 316.2 L957.2 319.7 L957.3 331.7 L957.7 367.0 L967.6 426.9 L972.9 473.0 L973.6 476.0 L974.1 473.0 L975.3 448.1 L978.2 422.1 L981.2 396.0 L983.4 386.7 L984.5 383.0 L989.5 406.1 L994.6 419.6 L1000.1 430.6 L1001.3 431.1 L1002.3 429.6 L1006.4 414.1 L1008.0 378.3 L1011.0 344.2 L1013.5 321.9 L1014.6 317.7 L1015.6 314.5 L1016.8 314.2 L1017.6 317.7 L1017.7 330.8 L1018.1 368.5 L1029.2 432.6 L1035.3 482.0 L1036.0 485.0 L1036.5 482.0 L1037.9 458.9 L1041.0 434.5 L1044.3 410.2 L1046.6 401.5 L1047.8 398.0 L1053.4 427.5 L1059.1 444.7 L1065.4 459.0 L1066.6 459.5 L1067.6 458.0 L1070.3 442.0 L1071.5 405.1 L1073.7 370.0 L1075.5 347.0 L1075.9 342.5 L1076.9 339.3 L1078.1 339.0 L1078.9 342.5 L1079.0 352.6 L1079.4 383.8 L1091.7 436.7 L1098.6 477.0 L1099.3 480.0 L1099.8 477.0 L1101.0 453.3 L1103.9 428.4 L1106.9 403.5 L1109.1 394.6 L1110.2 391.0 L1115.5 415.0 L1120.9 429.0 L1126.8 440.5 L1128.0 441.0 L1129.0 439.5 L1133.7 423.1 L1135.6 385.5 L1138.9 349.8 L1141.8 326.3 L1143.2 321.7 L1144.2 318.5 L1145.4 318.2 L1146.2 321.7 L1146.3 334.0 L1146.7 370.0 L1155.9 431.0 L1160.9 478.0 L1161.6 481.0 L1162.1 478.0 L1163.7 451.6 L1167.0 424.2 L1170.6 396.7 L1173.2 386.9 L1174.5 383.0 L1179.5 405.1 L1184.6 418.0 L1190.1 428.6 L1191.3 429.1 L1192.3 427.6 L1196.0 411.5 L1197.6 374.5 L1200.3 339.3 L1202.7 316.3 L1203.6 311.8 L1204.6 308.6 L1205.8 308.3 L1206.6 311.8 L1206.7 325.1 L1207.1 363.2 L1218.8 428.0 L1225.2 478.0 L1225.9 481.0 L1226.4 478.0 L1227.8 456.1 L1230.9 432.8 L1234.2 409.5 L1236.6 401.2 L1237.8 397.9 L1243.1 427.5 L1248.5 444.7 L1254.4 459.0 L1255.6 459.5 L1256.6 458.0 L1259.6 441.5 L1261.0 403.7 L1263.3 367.7 L1265.4 344.2 L1265.9 339.5 L1266.9 336.3 L1268.1 336.0 L1268.9 339.5 L1269.0 350.4 L1269.4 383.3 L1281.1 439.3 L1287.6 482.0 L1288.3 485.0 L1288.8 482.0 L1290.0 457.4 L1292.9 431.6 L1295.9 405.9 L1298.1 396.7 L1299.2 393.0 L1304.8 417.0 L1310.5 430.9 L1316.8 442.4 L1318.0 442.9 L1319.0 441.4 L1323.0 424.5 L1324.7 385.7 L1327.6 348.8 L1330.1 324.6 L1331.2 319.7 L1332.2 316.5 L1333.4 316.2 L1334.2 319.7 L1334.3 332.1 L1334.7 368.3 L1344.6 429.7 L1349.9 477.0 L1350.6 480.0 L1351.1 477.0 L1352.7 451.5 L1356.0 424.9 L1359.6 398.3 L1362.2 388.8 L1363.5 385.0 L1368.5 406.2 L1373.6 418.5 L1379.1 428.6 L1380.3 429.1 L1381.3 427.6 L1385.3 414.2 L1387.0 383.0 L1389.9 353.2 L1392.4 333.8 L1393.5 330.6 L1394.5 327.4 L1395.7 327.1 L1396.5 330.6 L1396.6 342.4 L1397.0 377.3 L1407.5 436.5 L1413.3 482.0 L1414.0 485.0 L1414.5 482.0 L1415.9 458.9 L1419.0 434.5 L1422.3 410.1 L1424.6 401.4 L1425.8 397.9 L1431.1 424.7 L1436.5 440.4 L1442.4 453.3 L1443.6 453.8 L1444.6 452.3 L1447.6 434.9 L1449.0 395.2 L1451.3 357.5 L1453.4 332.7 L1453.9 327.6 L1454.9 324.4 L1456.1 324.1 L1456.9 327.6 L1457.0 338.7 L1457.4 372.0 L1469.7 428.7 L1476.6 472.0 L1477.3 475.0 L1477.8 472.0 L1479.2 449.8 L1482.3 426.3 L1485.6 402.8 L1487.9 394.4 L1489.1 391.0 L1494.8 414.9 L1500.5 428.8 L1506.9 440.3 L1508.1 440.8 L1509.1 439.3 L1513.3 422.8 L1515.0 384.8 L1518.0 348.7 L1520.6 325.1 L1521.8 320.4 L1522.8 317.2 L1524.0 316.9 L1524.8 320.4 L1524.9 332.9 L1525.3 369.1 L1534.8 430.6 L1539.9 478.0 L1540.6 481.0 L1541.1 478.0 L1542.4 451.1 L1545.3 423.2 L1548.4 395.3 L1550.7 385.4 L1551.8 381.4 L1557.0 404.0 L1562.1 417.2 L1567.8 428.0 L1569.0 428.5 L1570.0 427.0 L1573.9 413.6 L1575.4 382.1 L1578.3 352.3 L1580.7 332.7 L1581.7 329.5 L1582.7 326.3 L1583.9 326.0 L1584.7 329.5 L1584.8 341.9 L1585.2 378.1 L1596.6 439.7 L1602.9 487.0 L1603.6 490.0 L1604.1 487.0 L1605.4 463.2 L1608.3 438.2 L1611.4 413.2 L1613.7 404.3 L1614.8 400.7 L1620.6 428.7 L1626.3 445.0 L1632.8 458.5 L1634.0 459.0 L1635.0 457.5 L1638.2 440.8 L1639.5 402.6 L1642.0 366.3 L1644.1 342.5 L1644.7 337.7 L1645.7 334.5 L1646.9 334.2 L1647.7 337.7 L1647.8 348.3 L1648.2 380.5 L1659.6 435.2 L1665.9 477.0 L1666.6 480.0 L1667.1 477.0 L1668.4 453.1 L1671.3 428.1 L1674.4 403.0 L1676.6 394.1 L1677.7 390.5 L1683.5 412.7 L1689.3 425.6 L1695.8 436.2 L1697.0 436.7 L1698.0 435.2 L1702.2 419.3 L1703.9 382.6 L1706.9 347.7 L1709.5 324.8 L1710.7 320.4 L1711.7 317.2 L1712.9 316.9 L1713.7 320.4 L1713.8 332.4 L1714.2 367.7 L1723.7 427.7 L1728.8 473.8 L1729.5 476.8 L1730.0 473.8 L1731.5 447.2 L1734.6 419.7 L1738.0 392.1 L1740.5 382.2 L1741.7 378.3 L1746.9 401.9 L1752.1 415.7 L1757.8 427.0 L1759.0 427.5 L1760.0 426.0 L1763.8 412.9 L1765.4 382.1 L1768.2 352.8 L1770.6 333.7 L1771.6 330.6 L1772.6 327.4 L1773.8 327.1 L1774.6 330.6 L1774.7 342.9 L1775.1 378.9 L1785.9 440.0 L1791.8 487.0 L1792.5 490.0 L1793.0 487.0 L1794.5 462.0 L1797.6 435.8 L1801.0 409.7 L1803.5 400.3 L1804.7 396.6 L1810.5 427.0 L1816.3 444.8 L1822.8 459.5 L1824.0 460.0 L1825.0 458.5 L1827.8 442.9 L1829.0 406.8 L1831.3 372.5 L1833.2 350.1 L1833.6 345.8 L1834.6 342.6 L1835.8 342.3 L1836.6 345.8 L1836.7 355.6 L1837.1 386.0 L1849.1 437.7 L1855.8 477.0 L1856.5 480.0 L1857.0 477.0 L1858.3 453.1 L1861.2 428.1 L1864.3 403.0 L1866.6 394.1 L1867.7 390.5 L1872.4 413.5 L1877.2 427.0 L1882.3 438.0 L1883.5 438.5 L1884.5 437.0" fill="none" stroke="#2a500a" stroke-width="6.5" stroke-linejoin="round" opacity="0.5"/>
<path d="M4.5 352.0L7.0 330.0M7.0 330.0L8.3 319.7M11.3 319.7L11.4 332.3M11.4 332.3L11.8 368.9M21.7 431.1L27.0 479.0M28.2 479.0L29.6 451.7M29.6 451.7L32.7 423.4M32.7 423.4L36.0 395.1M61.4 413.4L63.1 376.1M63.1 376.1L66.0 340.6M66.0 340.6L68.5 317.4M72.6 312.8L72.7 326.0M72.7 326.0L73.1 363.9M84.2 428.3L90.3 478.0M91.5 478.0L92.9 454.6M92.9 454.6L96.0 430.0M96.0 430.0L99.3 405.3M125.1 440.5L126.5 402.7M126.5 402.7L129.1 366.7M129.1 366.7L131.3 343.2M135.0 338.5L135.1 349.6M135.1 349.6L135.5 382.7M146.6 438.9L152.7 482.0M153.9 482.0L155.3 457.4M155.3 457.4L158.4 431.6M158.4 431.6L161.7 405.9M188.4 424.4L190.2 386.3M190.2 386.3L193.3 350.1M193.3 350.1L196.0 326.4M200.3 321.7L200.4 333.9M200.4 333.9L200.8 369.6M210.7 430.3L216.0 477.0M217.2 477.0L218.6 450.3M218.6 450.3L221.7 422.6M221.7 422.6L225.0 394.9M250.4 413.5L252.1 380.8M252.1 380.8L255.0 349.6M255.0 349.6L257.5 329.2M261.6 325.7L261.7 338.5M261.7 338.5L262.1 375.6M273.2 438.5L279.3 487.0M280.5 487.0L281.7 460.3M281.7 460.3L284.6 432.6M284.6 432.6L287.6 404.9M314.4 430.1L315.6 391.4M315.6 391.4L317.8 354.7M317.8 354.7L319.6 330.6M319.6 330.6L320.0 325.7M323.0 325.7L323.1 337.1M323.1 337.1L323.5 371.1M335.2 428.8L341.7 473.0M342.9 473.0L344.3 450.5M344.3 450.5L347.4 426.7M347.4 426.7L350.7 402.9M378.4 422.1L380.1 384.5M380.1 384.5L383.3 348.8M383.3 348.8L386.0 325.3M390.2 320.7L390.3 333.1M390.3 333.1L390.7 369.3M400.6 430.7L405.9 478.0M407.1 478.0L408.3 451.6M408.3 451.6L411.2 424.2M411.2 424.2L414.2 396.7M440.0 415.9L441.6 384.1M441.6 384.1L444.3 353.8M444.3 353.8L446.7 333.9M450.6 330.6L450.7 343.0M450.7 343.0L451.1 379.2M462.2 440.7L468.3 488.0M469.5 488.0L470.7 463.1M470.7 463.1L473.5 437.0M473.5 437.0L476.6 410.9M503.6 439.8L505.0 400.5M505.0 400.5L507.3 363.1M507.3 363.1L509.4 338.6M509.4 338.6L509.9 333.6M512.9 333.6L513.0 344.3M513.0 344.3L513.4 376.8M532.8 474.0L534.0 451.2M534.0 451.2L536.9 427.1M536.9 427.1L539.9 403.0M566.4 421.7L568.1 385.3M568.1 385.3L571.3 350.7M571.3 350.7L574.0 328.1M578.2 323.7L578.3 335.8M578.3 335.8L578.7 371.3M588.6 431.6L593.9 478.0M595.1 478.0L596.5 452.2M596.5 452.2L599.6 425.3M599.6 425.3L602.9 398.4M629.7 415.0L631.1 385.2M631.1 385.2L633.7 357.0M633.7 357.0L635.9 338.4M639.6 335.6L639.7 347.5M639.7 347.5L640.1 382.6M651.2 442.2L657.3 488.0M658.5 488.0L659.9 463.9M659.9 463.9L663.0 438.7M663.0 438.7L666.3 413.4M692.3 441.5L693.5 405.9M693.5 405.9L695.7 371.9M695.7 371.9L697.5 349.7M697.5 349.7L697.9 345.5M700.9 345.5L701.0 355.4M701.0 355.4L701.4 385.8M720.8 477.0L722.4 452.7M722.4 452.7L725.7 427.2M725.7 427.2L729.3 401.7M755.4 417.7L757.1 381.3M757.1 381.3L760.3 346.7M760.3 346.7L763.0 324.1M767.2 319.7L767.3 331.7M767.3 331.7L767.7 367.0M777.6 426.9L782.9 473.0M784.1 473.0L785.5 448.4M785.5 448.4L788.6 422.6M788.6 422.6L791.9 396.9M817.4 415.5L819.0 382.7M819.0 382.7L822.0 351.6M822.0 351.6L824.5 331.1M828.6 327.6L828.7 339.8M828.7 339.8L829.1 375.6M840.2 436.3L846.3 483.0M847.5 483.0L848.9 459.6M848.9 459.6L852.0 434.9M852.0 434.9L855.3 410.2M881.6 442.5L883.0 406.9M883.0 406.9L885.3 372.9M885.3 372.9L887.4 350.7M887.4 350.7L887.9 346.5M890.9 346.5L891.0 356.2M891.0 356.2L891.4 386.5M909.8 477.0L911.2 452.7M911.2 452.7L914.3 427.2M914.3 427.2L917.6 401.7M944.7 422.0L946.6 384.1M946.6 384.1L949.9 348.0M949.9 348.0L952.8 324.4M957.2 319.7L957.3 331.7M957.3 331.7L957.7 367.0M967.6 426.9L972.9 473.0M974.1 473.0L975.3 448.1M975.3 448.1L978.2 422.1M978.2 422.1L981.2 396.0M1006.4 414.1L1008.0 378.3M1008.0 378.3L1011.0 344.2M1011.0 344.2L1013.5 321.9M1017.6 317.7L1017.7 330.8M1017.7 330.8L1018.1 368.5M1029.2 432.6L1035.3 482.0M1036.5 482.0L1037.9 458.9M1037.9 458.9L1041.0 434.5M1041.0 434.5L1044.3 410.2M1070.3 442.0L1071.5 405.1M1071.5 405.1L1073.7 370.0M1073.7 370.0L1075.5 347.0M1075.5 347.0L1075.9 342.5M1078.9 342.5L1079.0 352.6M1079.0 352.6L1079.4 383.8M1099.8 477.0L1101.0 453.3M1101.0 453.3L1103.9 428.4M1103.9 428.4L1106.9 403.5M1133.7 423.1L1135.6 385.5M1135.6 385.5L1138.9 349.8M1138.9 349.8L1141.8 326.3M1146.2 321.7L1146.3 334.0M1146.3 334.0L1146.7 370.0M1146.7 370.0L1155.9 431.0M1155.9 431.0L1160.9 478.0M1162.1 478.0L1163.7 451.6M1163.7 451.6L1167.0 424.2M1167.0 424.2L1170.6 396.7M1196.0 411.5L1197.6 374.5M1197.6 374.5L1200.3 339.3M1200.3 339.3L1202.7 316.3M1206.6 311.8L1206.7 325.1M1206.7 325.1L1207.1 363.2M1218.8 428.0L1225.2 478.0M1226.4 478.0L1227.8 456.1M1227.8 456.1L1230.9 432.8M1230.9 432.8L1234.2 409.5M1259.6 441.5L1261.0 403.7M1261.0 403.7L1263.3 367.7M1263.3 367.7L1265.4 344.2M1265.4 344.2L1265.9 339.5M1268.9 339.5L1269.0 350.4M1269.0 350.4L1269.4 383.3M1281.1 439.3L1287.6 482.0M1288.8 482.0L1290.0 457.4M1290.0 457.4L1292.9 431.6M1292.9 431.6L1295.9 405.9M1323.0 424.5L1324.7 385.7M1324.7 385.7L1327.6 348.8M1327.6 348.8L1330.1 324.6M1334.2 319.7L1334.3 332.1M1334.3 332.1L1334.7 368.3M1344.6 429.7L1349.9 477.0M1351.1 477.0L1352.7 451.5M1352.7 451.5L1356.0 424.9M1356.0 424.9L1359.6 398.3M1385.3 414.2L1387.0 383.0M1387.0 383.0L1389.9 353.2M1389.9 353.2L1392.4 333.8M1396.5 330.6L1396.6 342.4M1396.6 342.4L1397.0 377.3M1407.5 436.5L1413.3 482.0M1414.5 482.0L1415.9 458.9M1415.9 458.9L1419.0 434.5M1419.0 434.5L1422.3 410.1M1447.6 434.9L1449.0 395.2M1449.0 395.2L1451.3 357.5M1451.3 357.5L1453.4 332.7M1453.4 332.7L1453.9 327.6M1456.9 327.6L1457.0 338.7M1457.0 338.7L1457.4 372.0M1477.8 472.0L1479.2 449.8M1479.2 449.8L1482.3 426.3M1482.3 426.3L1485.6 402.8M1513.3 422.8L1515.0 384.8M1515.0 384.8L1518.0 348.7M1518.0 348.7L1520.6 325.1M1524.8 320.4L1524.9 332.9M1524.9 332.9L1525.3 369.1M1534.8 430.6L1539.9 478.0M1541.1 478.0L1542.4 451.1M1542.4 451.1L1545.3 423.2M1545.3 423.2L1548.4 395.3M1573.9 413.6L1575.4 382.1M1575.4 382.1L1578.3 352.3M1578.3 352.3L1580.7 332.7M1584.7 329.5L1584.8 341.9M1584.8 341.9L1585.2 378.1M1596.6 439.7L1602.9 487.0M1604.1 487.0L1605.4 463.2M1605.4 463.2L1608.3 438.2M1608.3 438.2L1611.4 413.2M1638.2 440.8L1639.5 402.6M1639.5 402.6L1642.0 366.3M1642.0 366.3L1644.1 342.5M1644.1 342.5L1644.7 337.7M1647.7 337.7L1647.8 348.3M1647.8 348.3L1648.2 380.5M1659.6 435.2L1665.9 477.0M1667.1 477.0L1668.4 453.1M1668.4 453.1L1671.3 428.1M1671.3 428.1L1674.4 403.0M1702.2 419.3L1703.9 382.6M1703.9 382.6L1706.9 347.7M1706.9 347.7L1709.5 324.8M1713.7 320.4L1713.8 332.4M1713.8 332.4L1714.2 367.7M1723.7 427.7L1728.8 473.8M1730.0 473.8L1731.5 447.2M1731.5 447.2L1734.6 419.7M1734.6 419.7L1738.0 392.1M1763.8 412.9L1765.4 382.1M1765.4 382.1L1768.2 352.8M1768.2 352.8L1770.6 333.7M1774.6 330.6L1774.7 342.9M1774.7 342.9L1775.1 378.9M1785.9 440.0L1791.8 487.0M1793.0 487.0L1794.5 462.0M1794.5 462.0L1797.6 435.8M1797.6 435.8L1801.0 409.7M1827.8 442.9L1829.0 406.8M1829.0 406.8L1831.3 372.5M1831.3 372.5L1833.2 350.1M1833.2 350.1L1833.6 345.8M1836.6 345.8L1836.7 355.6M1836.7 355.6L1837.1 386.0M1857.0 477.0L1858.3 453.1M1858.3 453.1L1861.2 428.1M1861.2 428.1L1864.3 403.0" fill="none" stroke="#80c010" stroke-width="2.9" stroke-linecap="round"/>
<path d="M10.5 316.2L11.3 319.7M11.8 368.9L21.7 431.1M27.0 479.0L27.7 482.0M27.7 482.0L28.2 479.0M36.0 395.1L38.4 385.0M39.6 381.0L44.6 405.0M57.4 429.6L61.4 413.4M68.5 317.4L69.6 312.8M71.8 309.3L72.6 312.8M73.1 363.9L84.2 428.3M90.3 478.0L91.0 481.0M91.0 481.0L91.5 478.0M99.3 405.3L101.7 396.5M102.9 393.0L108.2 424.4M108.2 424.4L113.6 442.8M121.7 457.0L125.1 440.5M131.3 343.2L132.0 338.5M134.2 335.0L135.0 338.5M135.5 382.7L146.6 438.9M152.7 482.0L153.4 485.0M153.4 485.0L153.9 482.0M161.7 405.9L164.0 396.7M165.2 393.0L170.5 416.8M184.0 441.0L188.4 424.4M196.0 326.4L197.3 321.7M199.5 318.2L200.3 321.7M200.8 369.6L210.7 430.3M216.0 477.0L216.7 480.0M216.7 480.0L217.2 477.0M225.0 394.9L227.4 385.0M228.6 381.0L233.6 404.1M246.4 427.6L250.4 413.5M260.8 322.2L261.6 325.7M262.1 375.6L273.2 438.5M279.3 487.0L280.0 490.0M280.0 490.0L280.5 487.0M287.6 404.9L289.8 395.0M289.8 395.0L290.9 391.0M290.9 391.0L296.8 418.6M311.7 447.0L314.4 430.1M322.2 322.2L323.0 325.7M323.5 371.1L335.2 428.8M341.7 473.0L342.4 476.0M342.4 476.0L342.9 473.0M350.7 402.9L353.0 394.4M354.2 391.0L359.8 414.5M374.0 438.5L378.4 422.1M386.0 325.3L387.2 320.7M389.4 317.2L390.2 320.7M390.7 369.3L400.6 430.7M405.9 478.0L406.6 481.0M406.6 481.0L407.1 478.0M414.2 396.7L416.4 386.9M416.4 386.9L417.5 383.0M417.5 383.0L422.8 406.1M436.3 429.6L440.0 415.9M446.7 333.9L447.6 330.6M449.8 327.1L450.6 330.6M451.1 379.2L462.2 440.7M468.3 488.0L469.0 491.0M469.0 491.0L469.5 488.0M476.6 410.9L478.7 401.6M478.7 401.6L479.8 397.9M479.8 397.9L485.7 427.0M500.6 457.0L503.6 439.8M512.1 330.1L512.9 333.6M513.4 376.8L525.1 431.9M525.1 431.9L531.6 474.0M531.6 474.0L532.3 477.0M532.3 477.0L532.8 474.0M539.9 403.0L542.1 394.4M543.2 391.0L548.5 414.0M562.0 437.5L566.4 421.7M574.0 328.1L575.2 323.7M577.4 320.2L578.2 323.7M578.7 371.3L588.6 431.6M593.9 478.0L594.6 481.0M594.6 481.0L595.1 478.0M602.9 398.4L605.3 388.8M606.5 385.0L612.1 406.2M626.3 427.6L629.7 415.0M635.9 338.4L636.6 335.6M638.8 332.1L639.6 335.6M640.1 382.6L651.2 442.2M657.3 488.0L658.0 491.0M658.0 491.0L658.5 488.0M666.3 413.4L668.6 404.4M669.8 400.8L675.4 428.5M689.6 457.0L692.3 441.5M700.1 342.0L700.9 345.5M701.4 385.8L713.1 437.6M713.1 437.6L719.6 477.0M719.6 477.0L720.3 480.0M720.3 480.0L720.8 477.0M729.3 401.7L731.9 392.6M733.2 389.0L738.2 411.1M751.0 433.5L755.4 417.7M763.0 324.1L764.2 319.7M766.4 316.2L767.2 319.7M767.7 367.0L777.6 426.9M782.9 473.0L783.6 476.0M783.6 476.0L784.1 473.0M791.9 396.9L794.3 387.7M795.5 384.0L800.5 406.6M813.3 429.6L817.4 415.5M827.8 324.1L828.6 327.6M829.1 375.6L840.2 436.3M846.3 483.0L847.0 486.0M847.0 486.0L847.5 483.0M855.3 410.2L857.6 401.4M858.8 397.9L864.4 427.5M878.6 458.0L881.6 442.5M890.1 343.0L890.9 346.5M891.4 386.5L902.5 437.9M902.5 437.9L908.6 477.0M908.6 477.0L909.3 480.0M909.3 480.0L909.8 477.0M917.6 401.7L920.0 392.6M921.2 389.0L926.5 413.5M940.0 438.5L944.7 422.0M956.4 316.2L957.2 319.7M957.7 367.0L967.6 426.9M972.9 473.0L973.6 476.0M973.6 476.0L974.1 473.0M981.2 396.0L983.4 386.7M984.5 383.0L989.5 406.1M1002.3 429.6L1006.4 414.1M1013.5 321.9L1014.6 317.7M1016.8 314.2L1017.6 317.7M1018.1 368.5L1029.2 432.6M1035.3 482.0L1036.0 485.0M1036.0 485.0L1036.5 482.0M1044.3 410.2L1046.6 401.5M1047.8 398.0L1053.4 427.5M1067.6 458.0L1070.3 442.0M1078.1 339.0L1078.9 342.5M1079.4 383.8L1091.7 436.7M1091.7 436.7L1098.6 477.0M1098.6 477.0L1099.3 480.0M1099.3 480.0L1099.8 477.0M1106.9 403.5L1109.1 394.6M1110.2 391.0L1115.5 415.0M1129.0 439.5L1133.7 423.1M1145.4 318.2L1146.2 321.7M1160.9 478.0L1161.6 481.0M1161.6 481.0L1162.1 478.0M1170.6 396.7L1173.2 386.9M1174.5 383.0L1179.5 405.1M1192.3 427.6L1196.0 411.5M1202.7 316.3L1203.6 311.8M1205.8 308.3L1206.6 311.8M1207.1 363.2L1218.8 428.0M1225.2 478.0L1225.9 481.0M1225.9 481.0L1226.4 478.0M1234.2 409.5L1236.6 401.2M1237.8 397.9L1243.1 427.5M1256.6 458.0L1259.6 441.5M1268.1 336.0L1268.9 339.5M1269.4 383.3L1281.1 439.3M1287.6 482.0L1288.3 485.0M1288.3 485.0L1288.8 482.0M1295.9 405.9L1298.1 396.7M1299.2 393.0L1304.8 417.0M1319.0 441.4L1323.0 424.5M1330.1 324.6L1331.2 319.7M1333.4 316.2L1334.2 319.7M1334.7 368.3L1344.6 429.7M1349.9 477.0L1350.6 480.0M1350.6 480.0L1351.1 477.0M1359.6 398.3L1362.2 388.8M1363.5 385.0L1368.5 406.2M1395.7 327.1L1396.5 330.6M1397.0 377.3L1407.5 436.5M1413.3 482.0L1414.0 485.0M1414.0 485.0L1414.5 482.0M1422.3 410.1L1424.6 401.4M1425.8 397.9L1431.1 424.7M1444.6 452.3L1447.6 434.9M1456.1 324.1L1456.9 327.6M1457.4 372.0L1469.7 428.7M1469.7 428.7L1476.6 472.0M1476.6 472.0L1477.3 475.0M1477.3 475.0L1477.8 472.0M1485.6 402.8L1487.9 394.4M1489.1 391.0L1494.8 414.9M1509.1 439.3L1513.3 422.8M1520.6 325.1L1521.8 320.4M1524.0 316.9L1524.8 320.4M1525.3 369.1L1534.8 430.6M1539.9 478.0L1540.6 481.0M1540.6 481.0L1541.1 478.0M1548.4 395.3L1550.7 385.4M1550.7 385.4L1551.8 381.4M1551.8 381.4L1557.0 404.0M1570.0 427.0L1573.9 413.6M1583.9 326.0L1584.7 329.5M1585.2 378.1L1596.6 439.7M1602.9 487.0L1603.6 490.0M1603.6 490.0L1604.1 487.0M1611.4 413.2L1613.7 404.3M1614.8 400.7L1620.6 428.7M1635.0 457.5L1638.2 440.8M1646.9 334.2L1647.7 337.7M1648.2 380.5L1659.6 435.2M1665.9 477.0L1666.6 480.0M1666.6 480.0L1667.1 477.0M1674.4 403.0L1676.6 394.1M1677.7 390.5L1683.5 412.7M1698.0 435.2L1702.2 419.3M1709.5 324.8L1710.7 320.4M1712.9 316.9L1713.7 320.4M1714.2 367.7L1723.7 427.7M1728.8 473.8L1729.5 476.8M1729.5 476.8L1730.0 473.8M1738.0 392.1L1740.5 382.2M1741.7 378.3L1746.9 401.9M1760.0 426.0L1763.8 412.9M1773.8 327.1L1774.6 330.6M1775.1 378.9L1785.9 440.0M1791.8 487.0L1792.5 490.0M1792.5 490.0L1793.0 487.0M1801.0 409.7L1803.5 400.3M1804.7 396.6L1810.5 427.0M1825.0 458.5L1827.8 442.9M1835.8 342.3L1836.6 345.8M1837.1 386.0L1849.1 437.7M1849.1 437.7L1855.8 477.0M1855.8 477.0L1856.5 480.0M1856.5 480.0L1857.0 477.0M1864.3 403.0L1866.6 394.1M1867.7 390.5L1872.4 413.5" fill="none" stroke="#8ccc10" stroke-width="3.2" stroke-linecap="round"/>
<path d="M8.3 319.7L9.3 316.5M38.4 385.0L39.6 381.0M44.6 405.0L49.7 419.1M49.7 419.1L55.2 430.6M69.6 312.8L70.6 309.6M101.7 396.5L102.9 393.0M113.6 442.8L119.5 458.0M132.0 338.5L133.0 335.3M164.0 396.7L165.2 393.0M170.5 416.8L175.9 430.6M175.9 430.6L181.8 442.0M197.3 321.7L198.3 318.5M227.4 385.0L228.6 381.0M233.6 404.1L238.7 417.6M238.7 417.6L244.2 428.6M257.5 329.2L258.6 325.7M258.6 325.7L259.6 322.5M296.8 418.6L302.8 434.7M302.8 434.7L309.5 448.0M320.0 325.7L321.0 322.5M353.0 394.4L354.2 391.0M359.8 414.5L365.5 428.2M365.5 428.2L371.8 439.5M387.2 320.7L388.2 317.5M422.8 406.1L428.2 419.6M428.2 419.6L434.1 430.6M447.6 330.6L448.6 327.4M485.7 427.0L491.7 444.0M491.7 444.0L498.4 458.0M509.9 333.6L510.9 330.4M542.1 394.4L543.2 391.0M548.5 414.0L553.9 427.5M553.9 427.5L559.8 438.5M575.2 323.7L576.2 320.5M605.3 388.8L606.5 385.0M612.1 406.2L617.8 418.5M636.6 335.6L637.6 332.4M668.6 404.4L669.8 400.8M675.4 428.5L681.1 444.7M681.1 444.7L687.4 458.0M697.9 345.5L698.9 342.3M731.9 392.6L733.2 389.0M738.2 411.1L743.3 424.0M743.3 424.0L748.8 434.5M764.2 319.7L765.2 316.5M794.3 387.7L795.5 384.0M800.5 406.6L805.6 419.8M805.6 419.8L811.1 430.6M824.5 331.1L825.6 327.6M825.6 327.6L826.6 324.4M857.6 401.4L858.8 397.9M864.4 427.5L870.1 444.7M870.1 444.7L876.4 459.0M887.9 346.5L888.9 343.3M920.0 392.6L921.2 389.0M926.5 413.5L931.9 427.8M931.9 427.8L937.8 439.5M952.8 324.4L954.2 319.7M954.2 319.7L955.2 316.5M983.4 386.7L984.5 383.0M989.5 406.1L994.6 419.6M994.6 419.6L1000.1 430.6M1014.6 317.7L1015.6 314.5M1046.6 401.5L1047.8 398.0M1053.4 427.5L1059.1 444.7M1059.1 444.7L1065.4 459.0M1075.9 342.5L1076.9 339.3M1109.1 394.6L1110.2 391.0M1115.5 415.0L1120.9 429.0M1120.9 429.0L1126.8 440.5M1141.8 326.3L1143.2 321.7M1143.2 321.7L1144.2 318.5M1173.2 386.9L1174.5 383.0M1179.5 405.1L1184.6 418.0M1184.6 418.0L1190.1 428.6M1203.6 311.8L1204.6 308.6M1236.6 401.2L1237.8 397.9M1243.1 427.5L1248.5 444.7M1248.5 444.7L1254.4 459.0M1265.9 339.5L1266.9 336.3M1298.1 396.7L1299.2 393.0M1304.8 417.0L1310.5 430.9M1310.5 430.9L1316.8 442.4M1331.2 319.7L1332.2 316.5M1362.2 388.8L1363.5 385.0M1368.5 406.2L1373.6 418.5M1373.6 418.5L1379.1 428.6M1381.3 427.6L1385.3 414.2M1392.4 333.8L1393.5 330.6M1393.5 330.6L1394.5 327.4M1424.6 401.4L1425.8 397.9M1431.1 424.7L1436.5 440.4M1436.5 440.4L1442.4 453.3M1453.9 327.6L1454.9 324.4M1487.9 394.4L1489.1 391.0M1494.8 414.9L1500.5 428.8M1500.5 428.8L1506.9 440.3M1521.8 320.4L1522.8 317.2M1557.0 404.0L1562.1 417.2M1562.1 417.2L1567.8 428.0M1580.7 332.7L1581.7 329.5M1581.7 329.5L1582.7 326.3M1613.7 404.3L1614.8 400.7M1620.6 428.7L1626.3 445.0M1626.3 445.0L1632.8 458.5M1644.7 337.7L1645.7 334.5M1676.6 394.1L1677.7 390.5M1683.5 412.7L1689.3 425.6M1710.7 320.4L1711.7 317.2M1740.5 382.2L1741.7 378.3M1746.9 401.9L1752.1 415.7M1752.1 415.7L1757.8 427.0M1770.6 333.7L1771.6 330.6M1771.6 330.6L1772.6 327.4M1803.5 400.3L1804.7 396.6M1810.5 427.0L1816.3 444.8M1816.3 444.8L1822.8 459.5M1833.6 345.8L1834.6 342.6M1866.6 394.1L1867.7 390.5M1872.4 413.5L1877.2 427.0M1877.2 427.0L1882.3 438.0" fill="none" stroke="#94da10" stroke-width="3.8" stroke-linecap="round"/>
<path d="M9.3 316.5L10.5 316.2M55.2 430.6L56.4 431.1M56.4 431.1L57.4 429.6M70.6 309.6L71.8 309.3M119.5 458.0L120.7 458.5M120.7 458.5L121.7 457.0M133.0 335.3L134.2 335.0M181.8 442.0L183.0 442.5M183.0 442.5L184.0 441.0M198.3 318.5L199.5 318.2M244.2 428.6L245.4 429.1M245.4 429.1L246.4 427.6M259.6 322.5L260.8 322.2M309.5 448.0L310.7 448.5M310.7 448.5L311.7 447.0M321.0 322.5L322.2 322.2M371.8 439.5L373.0 440.0M373.0 440.0L374.0 438.5M388.2 317.5L389.4 317.2M434.1 430.6L435.3 431.1M435.3 431.1L436.3 429.6M448.6 327.4L449.8 327.1M498.4 458.0L499.6 458.5M499.6 458.5L500.6 457.0M510.9 330.4L512.1 330.1M559.8 438.5L561.0 439.0M561.0 439.0L562.0 437.5M576.2 320.5L577.4 320.2M617.8 418.5L624.1 428.6M624.1 428.6L625.3 429.1M625.3 429.1L626.3 427.6M637.6 332.4L638.8 332.1M687.4 458.0L688.6 458.5M688.6 458.5L689.6 457.0M698.9 342.3L700.1 342.0M748.8 434.5L750.0 435.0M750.0 435.0L751.0 433.5M765.2 316.5L766.4 316.2M811.1 430.6L812.3 431.1M812.3 431.1L813.3 429.6M826.6 324.4L827.8 324.1M876.4 459.0L877.6 459.5M877.6 459.5L878.6 458.0M888.9 343.3L890.1 343.0M937.8 439.5L939.0 440.0M939.0 440.0L940.0 438.5M955.2 316.5L956.4 316.2M1000.1 430.6L1001.3 431.1M1001.3 431.1L1002.3 429.6M1015.6 314.5L1016.8 314.2M1065.4 459.0L1066.6 459.5M1066.6 459.5L1067.6 458.0M1076.9 339.3L1078.1 339.0M1126.8 440.5L1128.0 441.0M1128.0 441.0L1129.0 439.5M1144.2 318.5L1145.4 318.2M1190.1 428.6L1191.3 429.1M1191.3 429.1L1192.3 427.6M1204.6 308.6L1205.8 308.3M1254.4 459.0L1255.6 459.5M1255.6 459.5L1256.6 458.0M1266.9 336.3L1268.1 336.0M1316.8 442.4L1318.0 442.9M1318.0 442.9L1319.0 441.4M1332.2 316.5L1333.4 316.2M1379.1 428.6L1380.3 429.1M1380.3 429.1L1381.3 427.6M1394.5 327.4L1395.7 327.1M1442.4 453.3L1443.6 453.8M1443.6 453.8L1444.6 452.3M1454.9 324.4L1456.1 324.1M1506.9 440.3L1508.1 440.8M1508.1 440.8L1509.1 439.3M1522.8 317.2L1524.0 316.9M1567.8 428.0L1569.0 428.5M1569.0 428.5L1570.0 427.0M1582.7 326.3L1583.9 326.0M1632.8 458.5L1634.0 459.0M1634.0 459.0L1635.0 457.5M1645.7 334.5L1646.9 334.2M1689.3 425.6L1695.8 436.2M1695.8 436.2L1697.0 436.7M1697.0 436.7L1698.0 435.2M1711.7 317.2L1712.9 316.9M1757.8 427.0L1759.0 427.5M1759.0 427.5L1760.0 426.0M1772.6 327.4L1773.8 327.1M1822.8 459.5L1824.0 460.0M1824.0 460.0L1825.0 458.5M1834.6 342.6L1835.8 342.3M1882.3 438.0L1883.5 438.5M1883.5 438.5L1884.5 437.0" fill="none" stroke="#98e010" stroke-width="4.0" stroke-linecap="round"/>
<path d="M4.5 352.0 L7.0 330.0 L8.3 319.7 L9.3 316.5 L10.5 316.2 L11.3 319.7 L11.4 332.3 L11.8 368.9 L21.7 431.1 L27.0 479.0 L27.7 482.0 L28.2 479.0 L29.6 451.7 L32.7 423.4 L36.0 395.1 L38.4 385.0 L39.6 381.0 L44.6 405.0 L49.7 419.1 L55.2 430.6 L56.4 431.1 L57.4 429.6 L61.4 413.4 L63.1 376.1 L66.0 340.6 L68.5 317.4 L69.6 312.8 L70.6 309.6 L71.8 309.3 L72.6 312.8 L72.7 326.0 L73.1 363.9 L84.2 428.3 L90.3 478.0 L91.0 481.0 L91.5 478.0 L92.9 454.6 L96.0 430.0 L99.3 405.3 L101.7 396.5 L102.9 393.0 L108.2 424.4 L113.6 442.8 L119.5 458.0 L120.7 458.5 L121.7 457.0 L125.1 440.5 L126.5 402.7 L129.1 366.7 L131.3 343.2 L132.0 338.5 L133.0 335.3 L134.2 335.0 L135.0 338.5 L135.1 349.6 L135.5 382.7 L146.6 438.9 L152.7 482.0 L153.4 485.0 L153.9 482.0 L155.3 457.4 L158.4 431.6 L161.7 405.9 L164.0 396.7 L165.2 393.0 L170.5 416.8 L175.9 430.6 L181.8 442.0 L183.0 442.5 L184.0 441.0 L188.4 424.4 L190.2 386.3 L193.3 350.1 L196.0 326.4 L197.3 321.7 L198.3 318.5 L199.5 318.2 L200.3 321.7 L200.4 333.9 L200.8 369.6 L210.7 430.3 L216.0 477.0 L216.7 480.0 L217.2 477.0 L218.6 450.3 L221.7 422.6 L225.0 394.9 L227.4 385.0 L228.6 381.0 L233.6 404.1 L238.7 417.6 L244.2 428.6 L245.4 429.1 L246.4 427.6 L250.4 413.5 L252.1 380.8 L255.0 349.6 L257.5 329.2 L258.6 325.7 L259.6 322.5 L260.8 322.2 L261.6 325.7 L261.7 338.5 L262.1 375.6 L273.2 438.5 L279.3 487.0 L280.0 490.0 L280.5 487.0 L281.7 460.3 L284.6 432.6 L287.6 404.9 L289.8 395.0 L290.9 391.0 L296.8 418.6 L302.8 434.7 L309.5 448.0 L310.7 448.5 L311.7 447.0 L314.4 430.1 L315.6 391.4 L317.8 354.7 L319.6 330.6 L320.0 325.7 L321.0 322.5 L322.2 322.2 L323.0 325.7 L323.1 337.1 L323.5 371.1 L335.2 428.8 L341.7 473.0 L342.4 476.0 L342.9 473.0 L344.3 450.5 L347.4 426.7 L350.7 402.9 L353.0 394.4 L354.2 391.0 L359.8 414.5 L365.5 428.2 L371.8 439.5 L373.0 440.0 L374.0 438.5 L378.4 422.1 L380.1 384.5 L383.3 348.8 L386.0 325.3 L387.2 320.7 L388.2 317.5 L389.4 317.2 L390.2 320.7 L390.3 333.1 L390.7 369.3 L400.6 430.7 L405.9 478.0 L406.6 481.0 L407.1 478.0 L408.3 451.6 L411.2 424.2 L414.2 396.7 L416.4 386.9 L417.5 383.0 L422.8 406.1 L428.2 419.6 L434.1 430.6 L435.3 431.1 L436.3 429.6 L440.0 415.9 L441.6 384.1 L444.3 353.8 L446.7 333.9 L447.6 330.6 L448.6 327.4 L449.8 327.1 L450.6 330.6 L450.7 343.0 L451.1 379.2 L462.2 440.7 L468.3 488.0 L469.0 491.0 L469.5 488.0 L470.7 463.1 L473.5 437.0 L476.6 410.9 L478.7 401.6 L479.8 397.9 L485.7 427.0 L491.7 444.0 L498.4 458.0 L499.6 458.5 L500.6 457.0 L503.6 439.8 L505.0 400.5 L507.3 363.1 L509.4 338.6 L509.9 333.6 L510.9 330.4 L512.1 330.1 L512.9 333.6 L513.0 344.3 L513.4 376.8 L525.1 431.9 L531.6 474.0 L532.3 477.0 L532.8 474.0 L534.0 451.2 L536.9 427.1 L539.9 403.0 L542.1 394.4 L543.2 391.0 L548.5 414.0 L553.9 427.5 L559.8 438.5 L561.0 439.0 L562.0 437.5 L566.4 421.7 L568.1 385.3 L571.3 350.7 L574.0 328.1 L575.2 323.7 L576.2 320.5 L577.4 320.2 L578.2 323.7 L578.3 335.8 L578.7 371.3 L588.6 431.6 L593.9 478.0 L594.6 481.0 L595.1 478.0 L596.5 452.2 L599.6 425.3 L602.9 398.4 L605.3 388.8 L606.5 385.0 L612.1 406.2 L617.8 418.5 L624.1 428.6 L625.3 429.1 L626.3 427.6 L629.7 415.0 L631.1 385.2 L633.7 357.0 L635.9 338.4 L636.6 335.6 L637.6 332.4 L638.8 332.1 L639.6 335.6 L639.7 347.5 L640.1 382.6 L651.2 442.2 L657.3 488.0 L658.0 491.0 L658.5 488.0 L659.9 463.9 L663.0 438.7 L666.3 413.4 L668.6 404.4 L669.8 400.8 L675.4 428.5 L681.1 444.7 L687.4 458.0 L688.6 458.5 L689.6 457.0 L692.3 441.5 L693.5 405.9 L695.7 371.9 L697.5 349.7 L697.9 345.5 L698.9 342.3 L700.1 342.0 L700.9 345.5 L701.0 355.4 L701.4 385.8 L713.1 437.6 L719.6 477.0 L720.3 480.0 L720.8 477.0 L722.4 452.7 L725.7 427.2 L729.3 401.7 L731.9 392.6 L733.2 389.0 L738.2 411.1 L743.3 424.0 L748.8 434.5 L750.0 435.0 L751.0 433.5 L755.4 417.7 L757.1 381.3 L760.3 346.7 L763.0 324.1 L764.2 319.7 L765.2 316.5 L766.4 316.2 L767.2 319.7 L767.3 331.7 L767.7 367.0 L777.6 426.9 L782.9 473.0 L783.6 476.0 L784.1 473.0 L785.5 448.4 L788.6 422.6 L791.9 396.9 L794.3 387.7 L795.5 384.0 L800.5 406.6 L805.6 419.8 L811.1 430.6 L812.3 431.1 L813.3 429.6 L817.4 415.5 L819.0 382.7 L822.0 351.6 L824.5 331.1 L825.6 327.6 L826.6 324.4 L827.8 324.1 L828.6 327.6 L828.7 339.8 L829.1 375.6 L840.2 436.3 L846.3 483.0 L847.0 486.0 L847.5 483.0 L848.9 459.6 L852.0 434.9 L855.3 410.2 L857.6 401.4 L858.8 397.9 L864.4 427.5 L870.1 444.7 L876.4 459.0 L877.6 459.5 L878.6 458.0 L881.6 442.5 L883.0 406.9 L885.3 372.9 L887.4 350.7 L887.9 346.5 L888.9 343.3 L890.1 343.0 L890.9 346.5 L891.0 356.2 L891.4 386.5 L902.5 437.9 L908.6 477.0 L909.3 480.0 L909.8 477.0 L911.2 452.7 L914.3 427.2 L917.6 401.7 L920.0 392.6 L921.2 389.0 L926.5 413.5 L931.9 427.8 L937.8 439.5 L939.0 440.0 L940.0 438.5 L944.7 422.0 L946.6 384.1 L949.9 348.0 L952.8 324.4 L954.2 319.7 L955.2 316.5 L956.4 316.2 L957.2 319.7 L957.3 331.7 L957.7 367.0 L967.6 426.9 L972.9 473.0 L973.6 476.0 L974.1 473.0 L975.3 448.1 L978.2 422.1 L981.2 396.0 L983.4 386.7 L984.5 383.0 L989.5 406.1 L994.6 419.6 L1000.1 430.6 L1001.3 431.1 L1002.3 429.6 L1006.4 414.1 L1008.0 378.3 L1011.0 344.2 L1013.5 321.9 L1014.6 317.7 L1015.6 314.5 L1016.8 314.2 L1017.6 317.7 L1017.7 330.8 L1018.1 368.5 L1029.2 432.6 L1035.3 482.0 L1036.0 485.0 L1036.5 482.0 L1037.9 458.9 L1041.0 434.5 L1044.3 410.2 L1046.6 401.5 L1047.8 398.0 L1053.4 427.5 L1059.1 444.7 L1065.4 459.0 L1066.6 459.5 L1067.6 458.0 L1070.3 442.0 L1071.5 405.1 L1073.7 370.0 L1075.5 347.0 L1075.9 342.5 L1076.9 339.3 L1078.1 339.0 L1078.9 342.5 L1079.0 352.6 L1079.4 383.8 L1091.7 436.7 L1098.6 477.0 L1099.3 480.0 L1099.8 477.0 L1101.0 453.3 L1103.9 428.4 L1106.9 403.5 L1109.1 394.6 L1110.2 391.0 L1115.5 415.0 L1120.9 429.0 L1126.8 440.5 L1128.0 441.0 L1129.0 439.5 L1133.7 423.1 L1135.6 385.5 L1138.9 349.8 L1141.8 326.3 L1143.2 321.7 L1144.2 318.5 L1145.4 318.2 L1146.2 321.7 L1146.3 334.0 L1146.7 370.0 L1155.9 431.0 L1160.9 478.0 L1161.6 481.0 L1162.1 478.0 L1163.7 451.6 L1167.0 424.2 L1170.6 396.7 L1173.2 386.9 L1174.5 383.0 L1179.5 405.1 L1184.6 418.0 L1190.1 428.6 L1191.3 429.1 L1192.3 427.6 L1196.0 411.5 L1197.6 374.5 L1200.3 339.3 L1202.7 316.3 L1203.6 311.8 L1204.6 308.6 L1205.8 308.3 L1206.6 311.8 L1206.7 325.1 L1207.1 363.2 L1218.8 428.0 L1225.2 478.0 L1225.9 481.0 L1226.4 478.0 L1227.8 456.1 L1230.9 432.8 L1234.2 409.5 L1236.6 401.2 L1237.8 397.9 L1243.1 427.5 L1248.5 444.7 L1254.4 459.0 L1255.6 459.5 L1256.6 458.0 L1259.6 441.5 L1261.0 403.7 L1263.3 367.7 L1265.4 344.2 L1265.9 339.5 L1266.9 336.3 L1268.1 336.0 L1268.9 339.5 L1269.0 350.4 L1269.4 383.3 L1281.1 439.3 L1287.6 482.0 L1288.3 485.0 L1288.8 482.0 L1290.0 457.4 L1292.9 431.6 L1295.9 405.9 L1298.1 396.7 L1299.2 393.0 L1304.8 417.0 L1310.5 430.9 L1316.8 442.4 L1318.0 442.9 L1319.0 441.4 L1323.0 424.5 L1324.7 385.7 L1327.6 348.8 L1330.1 324.6 L1331.2 319.7 L1332.2 316.5 L1333.4 316.2 L1334.2 319.7 L1334.3 332.1 L1334.7 368.3 L1344.6 429.7 L1349.9 477.0 L1350.6 480.0 L1351.1 477.0 L1352.7 451.5 L1356.0 424.9 L1359.6 398.3 L1362.2 388.8 L1363.5 385.0 L1368.5 406.2 L1373.6 418.5 L1379.1 428.6 L1380.3 429.1 L1381.3 427.6 L1385.3 414.2 L1387.0 383.0 L1389.9 353.2 L1392.4 333.8 L1393.5 330.6 L1394.5 327.4 L1395.7 327.1 L1396.5 330.6 L1396.6 342.4 L1397.0 377.3 L1407.5 436.5 L1413.3 482.0 L1414.0 485.0 L1414.5 482.0 L1415.9 458.9 L1419.0 434.5 L1422.3 410.1 L1424.6 401.4 L1425.8 397.9 L1431.1 424.7 L1436.5 440.4 L1442.4 453.3 L1443.6 453.8 L1444.6 452.3 L1447.6 434.9 L1449.0 395.2 L1451.3 357.5 L1453.4 332.7 L1453.9 327.6 L1454.9 324.4 L1456.1 324.1 L1456.9 327.6 L1457.0 338.7 L1457.4 372.0 L1469.7 428.7 L1476.6 472.0 L1477.3 475.0 L1477.8 472.0 L1479.2 449.8 L1482.3 426.3 L1485.6 402.8 L1487.9 394.4 L1489.1 391.0 L1494.8 414.9 L1500.5 428.8 L1506.9 440.3 L1508.1 440.8 L1509.1 439.3 L1513.3 422.8 L1515.0 384.8 L1518.0 348.7 L1520.6 325.1 L1521.8 320.4 L1522.8 317.2 L1524.0 316.9 L1524.8 320.4 L1524.9 332.9 L1525.3 369.1 L1534.8 430.6 L1539.9 478.0 L1540.6 481.0 L1541.1 478.0 L1542.4 451.1 L1545.3 423.2 L1548.4 395.3 L1550.7 385.4 L1551.8 381.4 L1557.0 404.0 L1562.1 417.2 L1567.8 428.0 L1569.0 428.5 L1570.0 427.0 L1573.9 413.6 L1575.4 382.1 L1578.3 352.3 L1580.7 332.7 L1581.7 329.5 L1582.7 326.3 L1583.9 326.0 L1584.7 329.5 L1584.8 341.9 L1585.2 378.1 L1596.6 439.7 L1602.9 487.0 L1603.6 490.0 L1604.1 487.0 L1605.4 463.2 L1608.3 438.2 L1611.4 413.2 L1613.7 404.3 L1614.8 400.7 L1620.6 428.7 L1626.3 445.0 L1632.8 458.5 L1634.0 459.0 L1635.0 457.5 L1638.2 440.8 L1639.5 402.6 L1642.0 366.3 L1644.1 342.5 L1644.7 337.7 L1645.7 334.5 L1646.9 334.2 L1647.7 337.7 L1647.8 348.3 L1648.2 380.5 L1659.6 435.2 L1665.9 477.0 L1666.6 480.0 L1667.1 477.0 L1668.4 453.1 L1671.3 428.1 L1674.4 403.0 L1676.6 394.1 L1677.7 390.5 L1683.5 412.7 L1689.3 425.6 L1695.8 436.2 L1697.0 436.7 L1698.0 435.2 L1702.2 419.3 L1703.9 382.6 L1706.9 347.7 L1709.5 324.8 L1710.7 320.4 L1711.7 317.2 L1712.9 316.9 L1713.7 320.4 L1713.8 332.4 L1714.2 367.7 L1723.7 427.7 L1728.8 473.8 L1729.5 476.8 L1730.0 473.8 L1731.5 447.2 L1734.6 419.7 L1738.0 392.1 L1740.5 382.2 L1741.7 378.3 L1746.9 401.9 L1752.1 415.7 L1757.8 427.0 L1759.0 427.5 L1760.0 426.0 L1763.8 412.9 L1765.4 382.1 L1768.2 352.8 L1770.6 333.7 L1771.6 330.6 L1772.6 327.4 L1773.8 327.1 L1774.6 330.6 L1774.7 342.9 L1775.1 378.9 L1785.9 440.0 L1791.8 487.0 L1792.5 490.0 L1793.0 487.0 L1794.5 462.0 L1797.6 435.8 L1801.0 409.7 L1803.5 400.3 L1804.7 396.6 L1810.5 427.0 L1816.3 444.8 L1822.8 459.5 L1824.0 460.0 L1825.0 458.5 L1827.8 442.9 L1829.0 406.8 L1831.3 372.5 L1833.2 350.1 L1833.6 345.8 L1834.6 342.6 L1835.8 342.3 L1836.6 345.8 L1836.7 355.6 L1837.1 386.0 L1849.1 437.7 L1855.8 477.0 L1856.5 480.0 L1857.0 477.0 L1858.3 453.1 L1861.2 428.1 L1864.3 403.0 L1866.6 394.1 L1867.7 390.5 L1872.4 413.5 L1877.2 427.0 L1882.3 438.0 L1883.5 438.5 L1884.5 437.0" fill="none" stroke="#b0f80a" stroke-width="1.6" stroke-linejoin="round" stroke-dasharray="2.2 2.3" opacity="0.75"/>
<path d="M4.5 352.0 L7.0 330.0 L8.3 319.7 L9.3 316.5 L10.5 316.2 L11.3 319.7 L11.4 332.3 L11.8 368.9 L21.7 431.1 L27.0 479.0 L27.7 482.0 L28.2 479.0 L29.6 451.7 L32.7 423.4 L36.0 395.1 L38.4 385.0 L39.6 381.0 L44.6 405.0 L49.7 419.1 L55.2 430.6 L56.4 431.1 L57.4 429.6 L61.4 413.4 L63.1 376.1 L66.0 340.6 L68.5 317.4 L69.6 312.8 L70.6 309.6 L71.8 309.3 L72.6 312.8 L72.7 326.0 L73.1 363.9 L84.2 428.3 L90.3 478.0 L91.0 481.0 L91.5 478.0 L92.9 454.6 L96.0 430.0 L99.3 405.3 L101.7 396.5 L102.9 393.0 L108.2 424.4 L113.6 442.8 L119.5 458.0 L120.7 458.5 L121.7 457.0 L125.1 440.5 L126.5 402.7 L129.1 366.7 L131.3 343.2 L132.0 338.5 L133.0 335.3 L134.2 335.0 L135.0 338.5 L135.1 349.6 L135.5 382.7 L146.6 438.9 L152.7 482.0 L153.4 485.0 L153.9 482.0 L155.3 457.4 L158.4 431.6 L161.7 405.9 L164.0 396.7 L165.2 393.0 L170.5 416.8 L175.9 430.6 L181.8 442.0 L183.0 442.5 L184.0 441.0 L188.4 424.4 L190.2 386.3 L193.3 350.1 L196.0 326.4 L197.3 321.7 L198.3 318.5 L199.5 318.2 L200.3 321.7 L200.4 333.9 L200.8 369.6 L210.7 430.3 L216.0 477.0 L216.7 480.0 L217.2 477.0 L218.6 450.3 L221.7 422.6 L225.0 394.9 L227.4 385.0 L228.6 381.0 L233.6 404.1 L238.7 417.6 L244.2 428.6 L245.4 429.1 L246.4 427.6 L250.4 413.5 L252.1 380.8 L255.0 349.6 L257.5 329.2 L258.6 325.7 L259.6 322.5 L260.8 322.2 L261.6 325.7 L261.7 338.5 L262.1 375.6 L273.2 438.5 L279.3 487.0 L280.0 490.0 L280.5 487.0 L281.7 460.3 L284.6 432.6 L287.6 404.9 L289.8 395.0 L290.9 391.0 L296.8 418.6 L302.8 434.7 L309.5 448.0 L310.7 448.5 L311.7 447.0 L314.4 430.1 L315.6 391.4 L317.8 354.7 L319.6 330.6 L320.0 325.7 L321.0 322.5 L322.2 322.2 L323.0 325.7 L323.1 337.1 L323.5 371.1 L335.2 428.8 L341.7 473.0 L342.4 476.0 L342.9 473.0 L344.3 450.5 L347.4 426.7 L350.7 402.9 L353.0 394.4 L354.2 391.0 L359.8 414.5 L365.5 428.2 L371.8 439.5 L373.0 440.0 L374.0 438.5 L378.4 422.1 L380.1 384.5 L383.3 348.8 L386.0 325.3 L387.2 320.7 L388.2 317.5 L389.4 317.2 L390.2 320.7 L390.3 333.1 L390.7 369.3 L400.6 430.7 L405.9 478.0 L406.6 481.0 L407.1 478.0 L408.3 451.6 L411.2 424.2 L414.2 396.7 L416.4 386.9 L417.5 383.0 L422.8 406.1 L428.2 419.6 L434.1 430.6 L435.3 431.1 L436.3 429.6 L440.0 415.9 L441.6 384.1 L444.3 353.8 L446.7 333.9 L447.6 330.6 L448.6 327.4 L449.8 327.1 L450.6 330.6 L450.7 343.0 L451.1 379.2 L462.2 440.7 L468.3 488.0 L469.0 491.0 L469.5 488.0 L470.7 463.1 L473.5 437.0 L476.6 410.9 L478.7 401.6 L479.8 397.9 L485.7 427.0 L491.7 444.0 L498.4 458.0 L499.6 458.5 L500.6 457.0 L503.6 439.8 L505.0 400.5 L507.3 363.1 L509.4 338.6 L509.9 333.6 L510.9 330.4 L512.1 330.1 L512.9 333.6 L513.0 344.3 L513.4 376.8 L525.1 431.9 L531.6 474.0 L532.3 477.0 L532.8 474.0 L534.0 451.2 L536.9 427.1 L539.9 403.0 L542.1 394.4 L543.2 391.0 L548.5 414.0 L553.9 427.5 L559.8 438.5 L561.0 439.0 L562.0 437.5 L566.4 421.7 L568.1 385.3 L571.3 350.7 L574.0 328.1 L575.2 323.7 L576.2 320.5 L577.4 320.2 L578.2 323.7 L578.3 335.8 L578.7 371.3 L588.6 431.6 L593.9 478.0 L594.6 481.0 L595.1 478.0 L596.5 452.2 L599.6 425.3 L602.9 398.4 L605.3 388.8 L606.5 385.0 L612.1 406.2 L617.8 418.5 L624.1 428.6 L625.3 429.1 L626.3 427.6 L629.7 415.0 L631.1 385.2 L633.7 357.0 L635.9 338.4 L636.6 335.6 L637.6 332.4 L638.8 332.1 L639.6 335.6 L639.7 347.5 L640.1 382.6 L651.2 442.2 L657.3 488.0 L658.0 491.0 L658.5 488.0 L659.9 463.9 L663.0 438.7 L666.3 413.4 L668.6 404.4 L669.8 400.8 L675.4 428.5 L681.1 444.7 L687.4 458.0 L688.6 458.5 L689.6 457.0 L692.3 441.5 L693.5 405.9 L695.7 371.9 L697.5 349.7 L697.9 345.5 L698.9 342.3 L700.1 342.0 L700.9 345.5 L701.0 355.4 L701.4 385.8 L713.1 437.6 L719.6 477.0 L720.3 480.0 L720.8 477.0 L722.4 452.7 L725.7 427.2 L729.3 401.7 L731.9 392.6 L733.2 389.0 L738.2 411.1 L743.3 424.0 L748.8 434.5 L750.0 435.0 L751.0 433.5 L755.4 417.7 L757.1 381.3 L760.3 346.7 L763.0 324.1 L764.2 319.7 L765.2 316.5 L766.4 316.2 L767.2 319.7 L767.3 331.7 L767.7 367.0 L777.6 426.9 L782.9 473.0 L783.6 476.0 L784.1 473.0 L785.5 448.4 L788.6 422.6 L791.9 396.9 L794.3 387.7 L795.5 384.0 L800.5 406.6 L805.6 419.8 L811.1 430.6 L812.3 431.1 L813.3 429.6 L817.4 415.5 L819.0 382.7 L822.0 351.6 L824.5 331.1 L825.6 327.6 L826.6 324.4 L827.8 324.1 L828.6 327.6 L828.7 339.8 L829.1 375.6 L840.2 436.3 L846.3 483.0 L847.0 486.0 L847.5 483.0 L848.9 459.6 L852.0 434.9 L855.3 410.2 L857.6 401.4 L858.8 397.9 L864.4 427.5 L870.1 444.7 L876.4 459.0 L877.6 459.5 L878.6 458.0 L881.6 442.5 L883.0 406.9 L885.3 372.9 L887.4 350.7 L887.9 346.5 L888.9 343.3 L890.1 343.0 L890.9 346.5 L891.0 356.2 L891.4 386.5 L902.5 437.9 L908.6 477.0 L909.3 480.0 L909.8 477.0 L911.2 452.7 L914.3 427.2 L917.6 401.7 L920.0 392.6 L921.2 389.0 L926.5 413.5 L931.9 427.8 L937.8 439.5 L939.0 440.0 L940.0 438.5 L944.7 422.0 L946.6 384.1 L949.9 348.0 L952.8 324.4 L954.2 319.7 L955.2 316.5 L956.4 316.2 L957.2 319.7 L957.3 331.7 L957.7 367.0 L967.6 426.9 L972.9 473.0 L973.6 476.0 L974.1 473.0 L975.3 448.1 L978.2 422.1 L981.2 396.0 L983.4 386.7 L984.5 383.0 L989.5 406.1 L994.6 419.6 L1000.1 430.6 L1001.3 431.1 L1002.3 429.6 L1006.4 414.1 L1008.0 378.3 L1011.0 344.2 L1013.5 321.9 L1014.6 317.7 L1015.6 314.5 L1016.8 314.2 L1017.6 317.7 L1017.7 330.8 L1018.1 368.5 L1029.2 432.6 L1035.3 482.0 L1036.0 485.0 L1036.5 482.0 L1037.9 458.9 L1041.0 434.5 L1044.3 410.2 L1046.6 401.5 L1047.8 398.0 L1053.4 427.5 L1059.1 444.7 L1065.4 459.0 L1066.6 459.5 L1067.6 458.0 L1070.3 442.0 L1071.5 405.1 L1073.7 370.0 L1075.5 347.0 L1075.9 342.5 L1076.9 339.3 L1078.1 339.0 L1078.9 342.5 L1079.0 352.6 L1079.4 383.8 L1091.7 436.7 L1098.6 477.0 L1099.3 480.0 L1099.8 477.0 L1101.0 453.3 L1103.9 428.4 L1106.9 403.5 L1109.1 394.6 L1110.2 391.0 L1115.5 415.0 L1120.9 429.0 L1126.8 440.5 L1128.0 441.0 L1129.0 439.5 L1133.7 423.1 L1135.6 385.5 L1138.9 349.8 L1141.8 326.3 L1143.2 321.7 L1144.2 318.5 L1145.4 318.2 L1146.2 321.7 L1146.3 334.0 L1146.7 370.0 L1155.9 431.0 L1160.9 478.0 L1161.6 481.0 L1162.1 478.0 L1163.7 451.6 L1167.0 424.2 L1170.6 396.7 L1173.2 386.9 L1174.5 383.0 L1179.5 405.1 L1184.6 418.0 L1190.1 428.6 L1191.3 429.1 L1192.3 427.6 L1196.0 411.5 L1197.6 374.5 L1200.3 339.3 L1202.7 316.3 L1203.6 311.8 L1204.6 308.6 L1205.8 308.3 L1206.6 311.8 L1206.7 325.1 L1207.1 363.2 L1218.8 428.0 L1225.2 478.0 L1225.9 481.0 L1226.4 478.0 L1227.8 456.1 L1230.9 432.8 L1234.2 409.5 L1236.6 401.2 L1237.8 397.9 L1243.1 427.5 L1248.5 444.7 L1254.4 459.0 L1255.6 459.5 L1256.6 458.0 L1259.6 441.5 L1261.0 403.7 L1263.3 367.7 L1265.4 344.2 L1265.9 339.5 L1266.9 336.3 L1268.1 336.0 L1268.9 339.5 L1269.0 350.4 L1269.4 383.3 L1281.1 439.3 L1287.6 482.0 L1288.3 485.0 L1288.8 482.0 L1290.0 457.4 L1292.9 431.6 L1295.9 405.9 L1298.1 396.7 L1299.2 393.0 L1304.8 417.0 L1310.5 430.9 L1316.8 442.4 L1318.0 442.9 L1319.0 441.4 L1323.0 424.5 L1324.7 385.7 L1327.6 348.8 L1330.1 324.6 L1331.2 319.7 L1332.2 316.5 L1333.4 316.2 L1334.2 319.7 L1334.3 332.1 L1334.7 368.3 L1344.6 429.7 L1349.9 477.0 L1350.6 480.0 L1351.1 477.0 L1352.7 451.5 L1356.0 424.9 L1359.6 398.3 L1362.2 388.8 L1363.5 385.0 L1368.5 406.2 L1373.6 418.5 L1379.1 428.6 L1380.3 429.1 L1381.3 427.6 L1385.3 414.2 L1387.0 383.0 L1389.9 353.2 L1392.4 333.8 L1393.5 330.6 L1394.5 327.4 L1395.7 327.1 L1396.5 330.6 L1396.6 342.4 L1397.0 377.3 L1407.5 436.5 L1413.3 482.0 L1414.0 485.0 L1414.5 482.0 L1415.9 458.9 L1419.0 434.5 L1422.3 410.1 L1424.6 401.4 L1425.8 397.9 L1431.1 424.7 L1436.5 440.4 L1442.4 453.3 L1443.6 453.8 L1444.6 452.3 L1447.6 434.9 L1449.0 395.2 L1451.3 357.5 L1453.4 332.7 L1453.9 327.6 L1454.9 324.4 L1456.1 324.1 L1456.9 327.6 L1457.0 338.7 L1457.4 372.0 L1469.7 428.7 L1476.6 472.0 L1477.3 475.0 L1477.8 472.0 L1479.2 449.8 L1482.3 426.3 L1485.6 402.8 L1487.9 394.4 L1489.1 391.0 L1494.8 414.9 L1500.5 428.8 L1506.9 440.3 L1508.1 440.8 L1509.1 439.3 L1513.3 422.8 L1515.0 384.8 L1518.0 348.7 L1520.6 325.1 L1521.8 320.4 L1522.8 317.2 L1524.0 316.9 L1524.8 320.4 L1524.9 332.9 L1525.3 369.1 L1534.8 430.6 L1539.9 478.0 L1540.6 481.0 L1541.1 478.0 L1542.4 451.1 L1545.3 423.2 L1548.4 395.3 L1550.7 385.4 L1551.8 381.4 L1557.0 404.0 L1562.1 417.2 L1567.8 428.0 L1569.0 428.5 L1570.0 427.0 L1573.9 413.6 L1575.4 382.1 L1578.3 352.3 L1580.7 332.7 L1581.7 329.5 L1582.7 326.3 L1583.9 326.0 L1584.7 329.5 L1584.8 341.9 L1585.2 378.1 L1596.6 439.7 L1602.9 487.0 L1603.6 490.0 L1604.1 487.0 L1605.4 463.2 L1608.3 438.2 L1611.4 413.2 L1613.7 404.3 L1614.8 400.7 L1620.6 428.7 L1626.3 445.0 L1632.8 458.5 L1634.0 459.0 L1635.0 457.5 L1638.2 440.8 L1639.5 402.6 L1642.0 366.3 L1644.1 342.5 L1644.7 337.7 L1645.7 334.5 L1646.9 334.2 L1647.7 337.7 L1647.8 348.3 L1648.2 380.5 L1659.6 435.2 L1665.9 477.0 L1666.6 480.0 L1667.1 477.0 L1668.4 453.1 L1671.3 428.1 L1674.4 403.0 L1676.6 394.1 L1677.7 390.5 L1683.5 412.7 L1689.3 425.6 L1695.8 436.2 L1697.0 436.7 L1698.0 435.2 L1702.2 419.3 L1703.9 382.6 L1706.9 347.7 L1709.5 324.8 L1710.7 320.4 L1711.7 317.2 L1712.9 316.9 L1713.7 320.4 L1713.8 332.4 L1714.2 367.7 L1723.7 427.7 L1728.8 473.8 L1729.5 476.8 L1730.0 473.8 L1731.5 447.2 L1734.6 419.7 L1738.0 392.1 L1740.5 382.2 L1741.7 378.3 L1746.9 401.9 L1752.1 415.7 L1757.8 427.0 L1759.0 427.5 L1760.0 426.0 L1763.8 412.9 L1765.4 382.1 L1768.2 352.8 L1770.6 333.7 L1771.6 330.6 L1772.6 327.4 L1773.8 327.1 L1774.6 330.6 L1774.7 342.9 L1775.1 378.9 L1785.9 440.0 L1791.8 487.0 L1792.5 490.0 L1793.0 487.0 L1794.5 462.0 L1797.6 435.8 L1801.0 409.7 L1803.5 400.3 L1804.7 396.6 L1810.5 427.0 L1816.3 444.8 L1822.8 459.5 L1824.0 460.0 L1825.0 458.5 L1827.8 442.9 L1829.0 406.8 L1831.3 372.5 L1833.2 350.1 L1833.6 345.8 L1834.6 342.6 L1835.8 342.3 L1836.6 345.8 L1836.7 355.6 L1837.1 386.0 L1849.1 437.7 L1855.8 477.0 L1856.5 480.0 L1857.0 477.0 L1858.3 453.1 L1861.2 428.1 L1864.3 403.0 L1866.6 394.1 L1867.7 390.5 L1872.4 413.5 L1877.2 427.0 L1882.3 438.0 L1883.5 438.5 L1884.5 437.0" fill="none" stroke="#0a1400" stroke-width="4" stroke-linejoin="round" stroke-dasharray="0.9 3.6" stroke-dashoffset="2.6" opacity="0.28"/>
<path d="M11.2 317.7V390.5 M72.5 310.8V386.3 M134.9 336.5V402.2 M200.2 319.7V390.7 M261.5 323.7V397.4 M322.9 323.7V391.1 M390.1 318.7V390.6 M450.5 328.6V400.6 M512.8 331.6V395.9 M578.1 321.7V392.3 M639.5 333.6V403.3 M700.8 343.5V403.8 M767.1 317.7V387.8 M828.5 325.6V396.7 M890.8 344.5V404.4 M957.1 317.7V387.8 M1017.5 315.7V390.8 M1078.8 340.5V402.2 M1146.1 319.7V391.2 M1206.5 309.8V385.7 M1268.8 337.5V402.8 M1334.1 317.7V389.6 M1396.4 328.6V397.9 M1456.8 325.6V391.7 M1524.7 318.4V390.5 M1584.6 327.5V399.5 M1647.6 335.7V399.5 M1713.6 318.4V388.6 M1774.5 328.6V400.1 M1836.5 343.8V404.0 " stroke="#3c6a0a" stroke-width="1.3" fill="none" opacity="0.45"/>
<path d="M578 40V330M766 160V320M957.5 35V310M71.5 275V310M1205 290V310M1396 294V330M1773 300V330M1836 330V345" stroke="#24400c" stroke-width="1.8" fill="none"/>
<path d="M12.0 546.4V650.6 M40.6 546.4V650.6 M57.4 546.4V650.6 M89.0 546.4V650.6 M105.0 546.4V650.6 M136.6 546.4V650.6 M153.4 546.4V650.6 M185.0 546.4V650.6 M203.8 546.4V650.6 M231.5 546.4V650.6 M246.4 546.4V650.6 M279.0 546.4V650.6 M295.9 546.4V650.6 M325.5 546.4V650.6 M343.4 546.4V650.6 M373.0 546.4V650.6 M391.8 546.4V650.6 M419.5 546.4V650.6 M437.3 546.4V650.6 M468.0 546.4V650.6 M484.8 546.4V650.6 M515.5 546.4V650.6 M532.3 546.4V650.6 M563.0 546.4V650.6 M579.8 546.4V650.6 M607.5 546.4V650.6 M625.3 546.4V650.6 M655.0 546.4V650.6 M672.8 546.4V650.6 M703.5 546.4V650.6 M720.3 546.4V650.6 M750.9 546.4V650.6 M770.7 546.4V650.6 M798.4 546.4V650.6 M814.3 546.4V650.6 M845.9 546.4V650.6 M863.7 546.4V650.6 M892.4 546.4V650.6 M911.2 546.4V650.6 M939.9 546.4V650.6 M958.7 546.4V650.6 M987.4 546.4V650.6 M1004.3 546.4V650.6 M1035.0 546.4V650.6 M1052.7 546.4V650.6 M1082.4 546.4V650.6 M1099.2 546.4V650.6 M1129.9 546.4V650.6 M1147.7 546.4V650.6 M1175.4 546.4V650.6 M1193.2 546.4V650.6 M1222.9 546.4V650.6 M1240.7 546.4V650.6 M1271.4 546.4V650.6 M1288.2 546.4V650.6 M1317.9 546.4V650.6 M1338.7 546.4V650.6 M1366.4 546.4V650.6 M1381.2 546.4V650.6 M1413.9 546.4V650.6 M1431.7 546.4V650.6 M1460.4 546.4V650.6 M1479.2 546.4V650.6 M1506.1 546.4V650.6 M1526.4 546.4V650.6 M1554.8 546.4V650.6 M1572.1 546.4V650.6 M1601.6 546.4V650.6 M1619.8 546.4V650.6 M1649.3 546.4V650.6 M1667.6 546.4V650.6 M1698.0 546.4V650.6 M1715.3 546.4V650.6 M1742.7 546.4V650.6 M1760.0 546.4V650.6 M1790.5 546.4V650.6 M1807.7 546.4V650.6 M1838.2 546.4V650.6 M1855.5 546.4V650.6 " stroke="#560a1e" stroke-width="1.4" fill="none"/>
<path d="M11.1 546.4h2v6.6h-2z M56.5 546.4h2v7.5h-2z M104.1 546.4h2v5.6h-2z M152.5 546.4h2v5.2h-2z M202.9 546.4h2v5.9h-2z M245.5 546.4h2v6.0h-2z M295.0 546.4h2v9.0h-2z M342.5 546.4h2v6.4h-2z M390.9 546.4h2v5.2h-2z M436.4 546.4h2v8.0h-2z M483.9 546.4h2v5.3h-2z M531.4 546.4h2v8.3h-2z M578.9 546.4h2v5.6h-2z M624.4 546.4h2v9.4h-2z M671.9 546.4h2v9.8h-2z M719.4 546.4h2v6.3h-2z M769.8 546.4h2v7.6h-2z M813.4 546.4h2v9.0h-2z M862.8 546.4h2v6.0h-2z M910.3 546.4h2v6.8h-2z M957.8 546.4h2v6.8h-2z M1003.4 546.4h2v5.5h-2z M1051.8 546.4h2v7.6h-2z M1098.3 546.4h2v8.5h-2z M1146.8 546.4h2v6.6h-2z M1192.3 546.4h2v8.7h-2z M1239.8 546.4h2v6.3h-2z M1287.3 546.4h2v6.8h-2z M1337.8 546.4h2v9.2h-2z M1380.3 546.4h2v8.9h-2z M1430.8 546.4h2v9.9h-2z M1478.3 546.4h2v5.8h-2z M1525.5 546.4h2v6.8h-2z M1571.2 546.4h2v9.7h-2z M1618.9 546.4h2v6.2h-2z M1666.7 546.4h2v7.3h-2z M1714.4 546.4h2v7.6h-2z M1759.1 546.4h2v7.4h-2z M1806.8 546.4h2v5.5h-2z M1854.6 546.4h2v8.8h-2z M39.8 640.8h1.8L44.1 650.6h-2.5z M88.2 642.8h1.8L92.5 650.6h-2.5z M135.8 644.0h1.8L140.1 650.6h-2.5z M184.2 640.8h1.8L188.5 650.6h-2.5z M230.7 642.5h1.8L235.0 650.6h-2.5z M278.2 642.8h1.8L282.5 650.6h-2.5z M324.7 641.4h1.8L329.0 650.6h-2.5z M372.2 644.1h1.8L376.5 650.6h-2.5z M418.7 642.3h1.8L423.0 650.6h-2.5z M467.2 640.8h1.8L471.5 650.6h-2.5z M514.7 642.8h1.8L519.0 650.6h-2.5z M562.2 643.6h1.8L566.5 650.6h-2.5z M606.7 641.6h1.8L611.0 650.6h-2.5z M654.2 644.5h1.8L658.5 650.6h-2.5z M702.7 641.3h1.8L707.0 650.6h-2.5z M750.1 640.7h1.8L754.4 650.6h-2.5z M797.6 644.4h1.8L801.9 650.6h-2.5z M845.1 641.2h1.8L849.4 650.6h-2.5z M891.6 644.0h1.8L895.9 650.6h-2.5z M939.1 640.7h1.8L943.4 650.6h-2.5z M986.6 643.8h1.8L990.9 650.6h-2.5z M1034.2 644.5h1.8L1038.5 650.6h-2.5z M1081.6 641.7h1.8L1085.9 650.6h-2.5z M1129.1 642.0h1.8L1133.4 650.6h-2.5z M1174.6 644.0h1.8L1178.9 650.6h-2.5z M1222.1 641.0h1.8L1226.4 650.6h-2.5z M1270.6 644.2h1.8L1274.9 650.6h-2.5z M1317.1 644.6h1.8L1321.4 650.6h-2.5z M1365.6 641.7h1.8L1369.9 650.6h-2.5z M1413.1 640.7h1.8L1417.4 650.6h-2.5z M1459.6 642.0h1.8L1463.9 650.6h-2.5z M1505.3 644.6h1.8L1509.6 650.6h-2.5z M1554.0 642.5h1.8L1558.3 650.6h-2.5z M1600.8 640.9h1.8L1605.1 650.6h-2.5z M1648.5 643.8h1.8L1652.8 650.6h-2.5z M1697.2 644.1h1.8L1701.5 650.6h-2.5z M1741.9 642.7h1.8L1746.2 650.6h-2.5z M1789.7 643.2h1.8L1794.0 650.6h-2.5z M1837.4 640.9h1.8L1841.7 650.6h-2.5z " fill="#900a38"/>
<path d="M11.0 534.6H41.8V546.4H11.0z M56.4 534.6H90.2V546.4H56.4z M104.0 534.6H137.8V546.4H104.0z M152.4 534.6H186.2V546.4H152.4z M202.8 534.6H232.7V546.4H202.8z M245.4 534.6H280.2V546.4H245.4z M294.9 534.6H326.7V546.4H294.9z M342.4 534.6H374.2V546.4H342.4z M390.8 534.6H420.7V546.4H390.8z M436.3 534.6H469.2V546.4H436.3z M483.8 534.6H516.7V546.4H483.8z M531.3 534.6H564.2V546.4H531.3z M578.8 534.6H608.7V546.4H578.8z M624.3 534.6H656.2V546.4H624.3z M671.8 534.6H704.7V546.4H671.8z M719.3 534.6H752.1V546.4H719.3z M769.7 534.6H799.6V546.4H769.7z M813.3 534.6H847.1V546.4H813.3z M862.7 534.6H893.6V546.4H862.7z M910.2 534.6H941.1V546.4H910.2z M957.7 534.6H988.6V546.4H957.7z M1003.3 534.6H1036.2V546.4H1003.3z M1051.7 534.6H1083.6V546.4H1051.7z M1098.2 534.6H1131.1V546.4H1098.2z M1146.7 534.6H1176.6V546.4H1146.7z M1192.2 534.6H1224.1V546.4H1192.2z M1239.7 534.6H1272.6V546.4H1239.7z M1287.2 534.6H1319.1V546.4H1287.2z M1337.7 534.6H1367.6V546.4H1337.7z M1380.2 534.6H1415.1V546.4H1380.2z M1430.7 534.6H1461.6V546.4H1430.7z M1478.2 534.6H1507.3V546.4H1478.2z M1525.4 534.6H1556.0V546.4H1525.4z M1571.1 534.6H1602.8V546.4H1571.1z M1618.8 534.6H1650.5V546.4H1618.8z M1666.6 534.6H1699.2V546.4H1666.6z M1714.3 534.6H1743.9V546.4H1714.3z M1759.0 534.6H1791.7V546.4H1759.0z M1806.7 534.6H1839.4V546.4H1806.7z M1854.5 534.6H1884.2V546.4H1854.5z M39.6 650.6H58.6V662.4H39.6z M88.0 650.6H106.2V662.4H88.0z M135.6 650.6H154.6V662.4H135.6z M184.0 650.6H205.0V662.4H184.0z M230.5 650.6H247.6V662.4H230.5z M278.0 650.6H297.1V662.4H278.0z M324.5 650.6H344.6V662.4H324.5z M372.0 650.6H393.0V662.4H372.0z M418.5 650.6H438.5V662.4H418.5z M467.0 650.6H486.0V662.4H467.0z M514.5 650.6H533.5V662.4H514.5z M562.0 650.6H581.0V662.4H562.0z M606.5 650.6H626.5V662.4H606.5z M654.0 650.6H674.0V662.4H654.0z M702.5 650.6H721.5V662.4H702.5z M749.9 650.6H771.9V662.4H749.9z M797.4 650.6H815.5V662.4H797.4z M844.9 650.6H864.9V662.4H844.9z M891.4 650.6H912.4V662.4H891.4z M938.9 650.6H959.9V662.4H938.9z M986.4 650.6H1005.5V662.4H986.4z M1034.0 650.6H1053.9V662.4H1034.0z M1081.4 650.6H1100.4V662.4H1081.4z M1128.9 650.6H1148.9V662.4H1128.9z M1174.4 650.6H1194.4V662.4H1174.4z M1221.9 650.6H1241.9V662.4H1221.9z M1270.4 650.6H1289.4V662.4H1270.4z M1316.9 650.6H1339.9V662.4H1316.9z M1365.4 650.6H1382.4V662.4H1365.4z M1412.9 650.6H1432.9V662.4H1412.9z M1459.4 650.6H1480.4V662.4H1459.4z M1505.1 650.6H1527.6V662.4H1505.1z M1553.8 650.6H1573.3V662.4H1553.8z M1600.6 650.6H1621.0V662.4H1600.6z M1648.3 650.6H1668.8V662.4H1648.3z M1697.0 650.6H1716.5V662.4H1697.0z M1741.7 650.6H1761.2V662.4H1741.7z M1789.5 650.6H1808.9V662.4H1789.5z M1837.2 650.6H1856.7V662.4H1837.2z " fill="#ea0e5c"/>
<path d="M18.4 546.4h1.3v3.5h-1.3z M16.6 546.4h1.3v3.1h-1.3z M23.3 546.4h1.3v1.7h-1.3z M61.4 546.4h1.3v2.8h-1.3z M62.2 546.4h1.3v1.8h-1.3z M71.3 546.4h1.3v4.0h-1.3z M113.7 546.4h1.3v3.4h-1.3z M132.3 546.4h1.3v3.2h-1.3z M118.2 546.4h1.3v4.4h-1.3z M178.4 546.4h1.3v2.4h-1.3z M160.1 546.4h1.3v1.9h-1.3z M164.3 546.4h1.3v3.9h-1.3z M219.4 546.4h1.3v3.4h-1.3z M214.9 546.4h1.3v3.1h-1.3z M208.2 546.4h1.3v1.7h-1.3z M267.5 546.4h1.3v2.8h-1.3z M257.8 546.4h1.3v3.3h-1.3z M261.5 546.4h1.3v2.4h-1.3z M315.4 546.4h1.3v2.2h-1.3z M312.5 546.4h1.3v3.1h-1.3z M319.6 546.4h1.3v3.7h-1.3z M369.5 546.4h1.3v1.9h-1.3z M356.3 546.4h1.3v3.8h-1.3z M350.0 546.4h1.3v3.0h-1.3z M409.3 546.4h1.3v3.8h-1.3z M407.2 546.4h1.3v4.1h-1.3z M401.6 546.4h1.3v3.6h-1.3z M454.6 546.4h1.3v2.9h-1.3z M461.0 546.4h1.3v4.3h-1.3z M452.0 546.4h1.3v3.5h-1.3z M505.1 546.4h1.3v3.4h-1.3z M512.3 546.4h1.3v4.0h-1.3z M494.8 546.4h1.3v2.7h-1.3z M535.9 546.4h1.3v2.9h-1.3z M539.5 546.4h1.3v1.9h-1.3z M536.8 546.4h1.3v3.8h-1.3z M588.2 546.4h1.3v2.7h-1.3z M601.7 546.4h1.3v1.7h-1.3z M592.5 546.4h1.3v3.1h-1.3z M647.7 546.4h1.3v4.1h-1.3z M634.9 546.4h1.3v2.7h-1.3z M636.8 546.4h1.3v4.2h-1.3z M679.5 546.4h1.3v2.0h-1.3z M681.5 546.4h1.3v2.2h-1.3z M687.8 546.4h1.3v3.3h-1.3z M723.4 546.4h1.3v2.8h-1.3z M732.4 546.4h1.3v3.2h-1.3z M746.7 546.4h1.3v3.6h-1.3z M787.1 546.4h1.3v3.5h-1.3z M774.9 546.4h1.3v4.2h-1.3z M790.6 546.4h1.3v4.1h-1.3z M827.3 546.4h1.3v2.7h-1.3z M820.0 546.4h1.3v3.4h-1.3z M818.9 546.4h1.3v1.7h-1.3z M870.4 546.4h1.3v2.5h-1.3z M867.9 546.4h1.3v1.5h-1.3z M870.1 546.4h1.3v1.8h-1.3z M914.8 546.4h1.3v4.1h-1.3z M928.1 546.4h1.3v1.9h-1.3z M919.9 546.4h1.3v2.5h-1.3z M964.5 546.4h1.3v4.0h-1.3z M984.2 546.4h1.3v2.9h-1.3z M972.7 546.4h1.3v1.8h-1.3z M1015.8 546.4h1.3v2.3h-1.3z M1027.8 546.4h1.3v2.0h-1.3z M1007.9 546.4h1.3v4.4h-1.3z M1059.2 546.4h1.3v3.1h-1.3z M1056.3 546.4h1.3v3.1h-1.3z M1078.9 546.4h1.3v4.1h-1.3z M1108.6 546.4h1.3v2.6h-1.3z M1106.3 546.4h1.3v3.8h-1.3z M1115.4 546.4h1.3v3.8h-1.3z M1155.5 546.4h1.3v3.9h-1.3z M1172.1 546.4h1.3v4.1h-1.3z M1168.2 546.4h1.3v4.0h-1.3z M1201.6 546.4h1.3v3.1h-1.3z M1204.6 546.4h1.3v1.6h-1.3z M1196.9 546.4h1.3v2.3h-1.3z M1260.8 546.4h1.3v4.4h-1.3z M1254.7 546.4h1.3v4.3h-1.3z M1268.1 546.4h1.3v4.4h-1.3z M1296.4 546.4h1.3v2.2h-1.3z M1295.9 546.4h1.3v2.1h-1.3z M1306.0 546.4h1.3v4.2h-1.3z M1352.1 546.4h1.3v3.5h-1.3z M1359.1 546.4h1.3v1.8h-1.3z M1356.0 546.4h1.3v4.2h-1.3z M1404.2 546.4h1.3v2.9h-1.3z M1389.0 546.4h1.3v3.9h-1.3z M1393.1 546.4h1.3v3.9h-1.3z M1443.7 546.4h1.3v2.7h-1.3z M1456.2 546.4h1.3v3.7h-1.3z M1438.6 546.4h1.3v1.9h-1.3z M1501.1 546.4h1.3v3.9h-1.3z M1485.3 546.4h1.3v4.0h-1.3z M1502.7 546.4h1.3v3.5h-1.3z M1541.7 546.4h1.3v1.9h-1.3z M1529.7 546.4h1.3v4.4h-1.3z M1544.0 546.4h1.3v3.1h-1.3z M1585.3 546.4h1.3v4.1h-1.3z M1594.5 546.4h1.3v2.1h-1.3z M1581.0 546.4h1.3v2.4h-1.3z M1636.6 546.4h1.3v2.3h-1.3z M1632.6 546.4h1.3v1.9h-1.3z M1644.2 546.4h1.3v2.6h-1.3z M1684.8 546.4h1.3v4.2h-1.3z M1680.9 546.4h1.3v4.3h-1.3z M1682.8 546.4h1.3v3.1h-1.3z M1718.7 546.4h1.3v2.8h-1.3z M1722.2 546.4h1.3v1.5h-1.3z M1735.4 546.4h1.3v2.0h-1.3z M1780.8 546.4h1.3v3.2h-1.3z M1771.0 546.4h1.3v3.1h-1.3z M1776.6 546.4h1.3v3.9h-1.3z M1824.4 546.4h1.3v2.2h-1.3z M1817.5 546.4h1.3v3.8h-1.3z M1823.1 546.4h1.3v3.2h-1.3z M1878.1 546.4h1.3v2.8h-1.3z M1871.7 546.4h1.3v3.0h-1.3z M1869.5 546.4h1.3v3.6h-1.3z M48.3 662.4h1.3v3.4h-1.3z M48.7 662.4h1.3v4.8h-1.3z M51.9 662.4h1.3v4.6h-1.3z M93.6 662.4h1.3v3.5h-1.3z M103.2 662.4h1.3v4.4h-1.3z M91.9 662.4h1.3v1.9h-1.3z M138.7 662.4h1.3v2.3h-1.3z M138.7 662.4h1.3v3.8h-1.3z M149.2 662.4h1.3v4.6h-1.3z M198.0 662.4h1.3v3.8h-1.3z M188.4 662.4h1.3v4.6h-1.3z M202.3 662.4h1.3v2.3h-1.3z M237.6 662.4h1.3v3.2h-1.3z M245.3 662.4h1.3v4.4h-1.3z M234.6 662.4h1.3v3.0h-1.3z M285.1 662.4h1.3v2.2h-1.3z M284.7 662.4h1.3v4.0h-1.3z M280.3 662.4h1.3v3.4h-1.3z M326.8 662.4h1.3v2.7h-1.3z M336.4 662.4h1.3v3.3h-1.3z M327.5 662.4h1.3v4.9h-1.3z M390.3 662.4h1.3v1.9h-1.3z M378.5 662.4h1.3v1.6h-1.3z M387.1 662.4h1.3v2.4h-1.3z M427.2 662.4h1.3v4.7h-1.3z M433.4 662.4h1.3v2.4h-1.3z M422.9 662.4h1.3v4.7h-1.3z M479.4 662.4h1.3v1.8h-1.3z M469.9 662.4h1.3v3.9h-1.3z M475.3 662.4h1.3v1.8h-1.3z M525.9 662.4h1.3v4.3h-1.3z M517.7 662.4h1.3v4.5h-1.3z M517.5 662.4h1.3v4.5h-1.3z M569.0 662.4h1.3v3.4h-1.3z M577.7 662.4h1.3v2.4h-1.3z M565.9 662.4h1.3v3.3h-1.3z M610.2 662.4h1.3v2.1h-1.3z M609.3 662.4h1.3v2.2h-1.3z M613.4 662.4h1.3v2.6h-1.3z M660.6 662.4h1.3v3.3h-1.3z M658.8 662.4h1.3v2.7h-1.3z M656.3 662.4h1.3v2.4h-1.3z M715.3 662.4h1.3v3.4h-1.3z M707.3 662.4h1.3v3.2h-1.3z M718.3 662.4h1.3v1.9h-1.3z M759.6 662.4h1.3v3.2h-1.3z M766.8 662.4h1.3v2.9h-1.3z M760.9 662.4h1.3v3.9h-1.3z M804.2 662.4h1.3v4.4h-1.3z M809.2 662.4h1.3v3.7h-1.3z M805.0 662.4h1.3v2.7h-1.3z M849.0 662.4h1.3v1.7h-1.3z M858.6 662.4h1.3v2.4h-1.3z M849.5 662.4h1.3v1.8h-1.3z M908.0 662.4h1.3v3.8h-1.3z M898.1 662.4h1.3v2.3h-1.3z M898.3 662.4h1.3v3.1h-1.3z M948.4 662.4h1.3v2.4h-1.3z M957.1 662.4h1.3v4.9h-1.3z M950.1 662.4h1.3v2.4h-1.3z M993.0 662.4h1.3v2.7h-1.3z M988.4 662.4h1.3v2.8h-1.3z M995.5 662.4h1.3v3.3h-1.3z M1043.9 662.4h1.3v1.5h-1.3z M1040.1 662.4h1.3v1.8h-1.3z M1042.3 662.4h1.3v1.6h-1.3z M1087.9 662.4h1.3v2.3h-1.3z M1092.1 662.4h1.3v3.4h-1.3z M1094.5 662.4h1.3v3.8h-1.3z M1144.8 662.4h1.3v2.9h-1.3z M1136.1 662.4h1.3v4.9h-1.3z M1133.3 662.4h1.3v4.0h-1.3z M1177.1 662.4h1.3v4.4h-1.3z M1190.5 662.4h1.3v3.7h-1.3z M1188.0 662.4h1.3v4.3h-1.3z M1232.2 662.4h1.3v3.3h-1.3z M1237.1 662.4h1.3v4.3h-1.3z M1237.0 662.4h1.3v3.5h-1.3z M1282.5 662.4h1.3v3.9h-1.3z M1275.8 662.4h1.3v1.6h-1.3z M1274.4 662.4h1.3v2.8h-1.3z M1334.6 662.4h1.3v3.5h-1.3z M1330.7 662.4h1.3v3.7h-1.3z M1331.7 662.4h1.3v3.2h-1.3z M1377.6 662.4h1.3v4.1h-1.3z M1373.8 662.4h1.3v3.4h-1.3z M1375.8 662.4h1.3v1.7h-1.3z M1418.9 662.4h1.3v1.8h-1.3z M1419.1 662.4h1.3v4.1h-1.3z M1418.1 662.4h1.3v4.1h-1.3z M1469.7 662.4h1.3v2.8h-1.3z M1469.4 662.4h1.3v3.9h-1.3z M1474.3 662.4h1.3v3.7h-1.3z M1508.5 662.4h1.3v2.0h-1.3z M1511.7 662.4h1.3v4.1h-1.3z M1512.7 662.4h1.3v3.5h-1.3z M1556.7 662.4h1.3v2.4h-1.3z M1566.1 662.4h1.3v3.9h-1.3z M1566.1 662.4h1.3v2.5h-1.3z M1610.1 662.4h1.3v3.1h-1.3z M1604.5 662.4h1.3v4.6h-1.3z M1605.8 662.4h1.3v4.9h-1.3z M1650.6 662.4h1.3v3.1h-1.3z M1663.7 662.4h1.3v4.9h-1.3z M1657.6 662.4h1.3v2.4h-1.3z M1713.5 662.4h1.3v2.2h-1.3z M1707.9 662.4h1.3v2.0h-1.3z M1707.0 662.4h1.3v4.8h-1.3z M1756.2 662.4h1.3v3.3h-1.3z M1757.3 662.4h1.3v4.0h-1.3z M1747.2 662.4h1.3v4.6h-1.3z M1791.9 662.4h1.3v1.5h-1.3z M1799.0 662.4h1.3v3.1h-1.3z M1796.1 662.4h1.3v2.0h-1.3z M1844.0 662.4h1.3v4.4h-1.3z M1839.2 662.4h1.3v4.1h-1.3z M1852.0 662.4h1.3v1.9h-1.3z " fill="#a00a40"/>
<path d="M12.0 534.6H40.6v3.2H12.0z M12.0 543.9H40.6v1H12.0z M57.4 534.6H89.0v3.2H57.4z M57.4 543.9H89.0v1H57.4z M105.0 534.6H136.6v3.2H105.0z M105.0 543.9H136.6v1H105.0z M153.4 534.6H185.0v3.2H153.4z M153.4 543.9H185.0v1H153.4z M203.8 534.6H231.5v3.2H203.8z M203.8 543.9H231.5v1H203.8z M246.4 534.6H279.0v3.2H246.4z M246.4 543.9H279.0v1H246.4z M295.9 534.6H325.5v3.2H295.9z M295.9 543.9H325.5v1H295.9z M343.4 534.6H373.0v3.2H343.4z M343.4 543.9H373.0v1H343.4z M391.8 534.6H419.5v3.2H391.8z M391.8 543.9H419.5v1H391.8z M437.3 534.6H468.0v3.2H437.3z M437.3 543.9H468.0v1H437.3z M484.8 534.6H515.5v3.2H484.8z M484.8 543.9H515.5v1H484.8z M532.3 534.6H563.0v3.2H532.3z M532.3 543.9H563.0v1H532.3z M579.8 534.6H607.5v3.2H579.8z M579.8 543.9H607.5v1H579.8z M625.3 534.6H655.0v3.2H625.3z M625.3 543.9H655.0v1H625.3z M672.8 534.6H703.5v3.2H672.8z M672.8 543.9H703.5v1H672.8z M720.3 534.6H750.9v3.2H720.3z M720.3 543.9H750.9v1H720.3z M770.7 534.6H798.4v3.2H770.7z M770.7 543.9H798.4v1H770.7z M814.3 534.6H845.9v3.2H814.3z M814.3 543.9H845.9v1H814.3z M863.7 534.6H892.4v3.2H863.7z M863.7 543.9H892.4v1H863.7z M911.2 534.6H939.9v3.2H911.2z M911.2 543.9H939.9v1H911.2z M958.7 534.6H987.4v3.2H958.7z M958.7 543.9H987.4v1H958.7z M1004.3 534.6H1035.0v3.2H1004.3z M1004.3 543.9H1035.0v1H1004.3z M1052.7 534.6H1082.4v3.2H1052.7z M1052.7 543.9H1082.4v1H1052.7z M1099.2 534.6H1129.9v3.2H1099.2z M1099.2 543.9H1129.9v1H1099.2z M1147.7 534.6H1175.4v3.2H1147.7z M1147.7 543.9H1175.4v1H1147.7z M1193.2 534.6H1222.9v3.2H1193.2z M1193.2 543.9H1222.9v1H1193.2z M1240.7 534.6H1271.4v3.2H1240.7z M1240.7 543.9H1271.4v1H1240.7z M1288.2 534.6H1317.9v3.2H1288.2z M1288.2 543.9H1317.9v1H1288.2z M1338.7 534.6H1366.4v3.2H1338.7z M1338.7 543.9H1366.4v1H1338.7z M1381.2 534.6H1413.9v3.2H1381.2z M1381.2 543.9H1413.9v1H1381.2z M1431.7 534.6H1460.4v3.2H1431.7z M1431.7 543.9H1460.4v1H1431.7z M1479.2 534.6H1506.1v3.2H1479.2z M1479.2 543.9H1506.1v1H1479.2z M1526.4 534.6H1554.8v3.2H1526.4z M1526.4 543.9H1554.8v1H1526.4z M1572.1 534.6H1601.6v3.2H1572.1z M1572.1 543.9H1601.6v1H1572.1z M1619.8 534.6H1649.3v3.2H1619.8z M1619.8 543.9H1649.3v1H1619.8z M1667.6 534.6H1698.0v3.2H1667.6z M1667.6 543.9H1698.0v1H1667.6z M1715.3 534.6H1742.7v3.2H1715.3z M1715.3 543.9H1742.7v1H1715.3z M1760.0 534.6H1790.5v3.2H1760.0z M1760.0 543.9H1790.5v1H1760.0z M1807.7 534.6H1838.2v3.2H1807.7z M1807.7 543.9H1838.2v1H1807.7z M1855.5 534.6H1883.0v3.2H1855.5z M1855.5 543.9H1883.0v1H1855.5z M40.6 650.6H57.4v3.2H40.6z M40.6 657.4H57.4v1H40.6z M89.0 650.6H105.0v3.2H89.0z M89.0 657.4H105.0v1H89.0z M136.6 650.6H153.4v3.2H136.6z M136.6 657.4H153.4v1H136.6z M185.0 650.6H203.8v3.2H185.0z M185.0 657.4H203.8v1H185.0z M231.5 650.6H246.4v3.2H231.5z M231.5 657.4H246.4v1H231.5z M279.0 650.6H295.9v3.2H279.0z M279.0 657.4H295.9v1H279.0z M325.5 650.6H343.4v3.2H325.5z M325.5 657.4H343.4v1H325.5z M373.0 650.6H391.8v3.2H373.0z M373.0 657.4H391.8v1H373.0z M419.5 650.6H437.3v3.2H419.5z M419.5 657.4H437.3v1H419.5z M468.0 650.6H484.8v3.2H468.0z M468.0 657.4H484.8v1H468.0z M515.5 650.6H532.3v3.2H515.5z M515.5 657.4H532.3v1H515.5z M563.0 650.6H579.8v3.2H563.0z M563.0 657.4H579.8v1H563.0z M607.5 650.6H625.3v3.2H607.5z M607.5 657.4H625.3v1H607.5z M655.0 650.6H672.8v3.2H655.0z M655.0 657.4H672.8v1H655.0z M703.5 650.6H720.3v3.2H703.5z M703.5 657.4H720.3v1H703.5z M750.9 650.6H770.7v3.2H750.9z M750.9 657.4H770.7v1H750.9z M798.4 650.6H814.3v3.2H798.4z M798.4 657.4H814.3v1H798.4z M845.9 650.6H863.7v3.2H845.9z M845.9 657.4H863.7v1H845.9z M892.4 650.6H911.2v3.2H892.4z M892.4 657.4H911.2v1H892.4z M939.9 650.6H958.7v3.2H939.9z M939.9 657.4H958.7v1H939.9z M987.4 650.6H1004.3v3.2H987.4z M987.4 657.4H1004.3v1H987.4z M1035.0 650.6H1052.7v3.2H1035.0z M1035.0 657.4H1052.7v1H1035.0z M1082.4 650.6H1099.2v3.2H1082.4z M1082.4 657.4H1099.2v1H1082.4z M1129.9 650.6H1147.7v3.2H1129.9z M1129.9 657.4H1147.7v1H1129.9z M1175.4 650.6H1193.2v3.2H1175.4z M1175.4 657.4H1193.2v1H1175.4z M1222.9 650.6H1240.7v3.2H1222.9z M1222.9 657.4H1240.7v1H1222.9z M1271.4 650.6H1288.2v3.2H1271.4z M1271.4 657.4H1288.2v1H1271.4z M1317.9 650.6H1338.7v3.2H1317.9z M1317.9 657.4H1338.7v1H1317.9z M1366.4 650.6H1381.2v3.2H1366.4z M1366.4 657.4H1381.2v1H1366.4z M1413.9 650.6H1431.7v3.2H1413.9z M1413.9 657.4H1431.7v1H1413.9z M1460.4 650.6H1479.2v3.2H1460.4z M1460.4 657.4H1479.2v1H1460.4z M1506.1 650.6H1526.4v3.2H1506.1z M1506.1 657.4H1526.4v1H1506.1z M1554.8 650.6H1572.1v3.2H1554.8z M1554.8 657.4H1572.1v1H1554.8z M1601.6 650.6H1619.8v3.2H1601.6z M1601.6 657.4H1619.8v1H1601.6z M1649.3 650.6H1667.6v3.2H1649.3z M1649.3 657.4H1667.6v1H1649.3z M1698.0 650.6H1715.3v3.2H1698.0z M1698.0 657.4H1715.3v1H1698.0z M1742.7 650.6H1760.0v3.2H1742.7z M1742.7 657.4H1760.0v1H1742.7z M1790.5 650.6H1807.7v3.2H1790.5z M1790.5 657.4H1807.7v1H1790.5z M1838.2 650.6H1855.5v3.2H1838.2z M1838.2 657.4H1855.5v1H1838.2z " fill="#8a0a36" opacity="0.5"/>
<path d="M12.0 535.8H40.6 M13.0 542.4H40.6 M57.4 535.8H89.0 M58.4 542.4H89.0 M105.0 535.8H136.6 M106.0 542.4H136.6 M153.4 535.8H185.0 M154.4 542.4H185.0 M203.8 535.8H231.5 M204.8 542.4H231.5 M246.4 535.8H279.0 M247.4 542.4H279.0 M295.9 535.8H325.5 M296.9 542.4H325.5 M343.4 535.8H373.0 M344.4 542.4H373.0 M391.8 535.8H419.5 M392.8 542.4H419.5 M437.3 535.8H468.0 M438.3 542.4H468.0 M484.8 535.8H515.5 M485.8 542.4H515.5 M532.3 535.8H563.0 M533.3 542.4H563.0 M579.8 535.8H607.5 M580.8 542.4H607.5 M625.3 535.8H655.0 M626.3 542.4H655.0 M672.8 535.8H703.5 M673.8 542.4H703.5 M720.3 535.8H750.9 M721.3 542.4H750.9 M770.7 535.8H798.4 M771.7 542.4H798.4 M814.3 535.8H845.9 M815.3 542.4H845.9 M863.7 535.8H892.4 M864.7 542.4H892.4 M911.2 535.8H939.9 M912.2 542.4H939.9 M958.7 535.8H987.4 M959.7 542.4H987.4 M1004.3 535.8H1035.0 M1005.3 542.4H1035.0 M1052.7 535.8H1082.4 M1053.7 542.4H1082.4 M1099.2 535.8H1129.9 M1100.2 542.4H1129.9 M1147.7 535.8H1175.4 M1148.7 542.4H1175.4 M1193.2 535.8H1222.9 M1194.2 542.4H1222.9 M1240.7 535.8H1271.4 M1241.7 542.4H1271.4 M1288.2 535.8H1317.9 M1289.2 542.4H1317.9 M1338.7 535.8H1366.4 M1339.7 542.4H1366.4 M1381.2 535.8H1413.9 M1382.2 542.4H1413.9 M1431.7 535.8H1460.4 M1432.7 542.4H1460.4 M1479.2 535.8H1506.1 M1480.2 542.4H1506.1 M1526.4 535.8H1554.8 M1527.4 542.4H1554.8 M1572.1 535.8H1601.6 M1573.1 542.4H1601.6 M1619.8 535.8H1649.3 M1620.8 542.4H1649.3 M1667.6 535.8H1698.0 M1668.6 542.4H1698.0 M1715.3 535.8H1742.7 M1716.3 542.4H1742.7 M1760.0 535.8H1790.5 M1761.0 542.4H1790.5 M1807.7 535.8H1838.2 M1808.7 542.4H1838.2 M1855.5 535.8H1883.0 M1856.5 542.4H1883.0 M40.6 651.8H57.4 M41.6 658.9H57.4 M89.0 651.8H105.0 M90.0 658.9H105.0 M136.6 651.8H153.4 M137.6 658.9H153.4 M185.0 651.8H203.8 M186.0 658.9H203.8 M231.5 651.8H246.4 M232.5 658.9H246.4 M279.0 651.8H295.9 M280.0 658.9H295.9 M325.5 651.8H343.4 M326.5 658.9H343.4 M373.0 651.8H391.8 M374.0 658.9H391.8 M419.5 651.8H437.3 M420.5 658.9H437.3 M468.0 651.8H484.8 M469.0 658.9H484.8 M515.5 651.8H532.3 M516.5 658.9H532.3 M563.0 651.8H579.8 M564.0 658.9H579.8 M607.5 651.8H625.3 M608.5 658.9H625.3 M655.0 651.8H672.8 M656.0 658.9H672.8 M703.5 651.8H720.3 M704.5 658.9H720.3 M750.9 651.8H770.7 M751.9 658.9H770.7 M798.4 651.8H814.3 M799.4 658.9H814.3 M845.9 651.8H863.7 M846.9 658.9H863.7 M892.4 651.8H911.2 M893.4 658.9H911.2 M939.9 651.8H958.7 M940.9 658.9H958.7 M987.4 651.8H1004.3 M988.4 658.9H1004.3 M1035.0 651.8H1052.7 M1036.0 658.9H1052.7 M1082.4 651.8H1099.2 M1083.4 658.9H1099.2 M1129.9 651.8H1147.7 M1130.9 658.9H1147.7 M1175.4 651.8H1193.2 M1176.4 658.9H1193.2 M1222.9 651.8H1240.7 M1223.9 658.9H1240.7 M1271.4 651.8H1288.2 M1272.4 658.9H1288.2 M1317.9 651.8H1338.7 M1318.9 658.9H1338.7 M1366.4 651.8H1381.2 M1367.4 658.9H1381.2 M1413.9 651.8H1431.7 M1414.9 658.9H1431.7 M1460.4 651.8H1479.2 M1461.4 658.9H1479.2 M1506.1 651.8H1526.4 M1507.1 658.9H1526.4 M1554.8 651.8H1572.1 M1555.8 658.9H1572.1 M1601.6 651.8H1619.8 M1602.6 658.9H1619.8 M1649.3 651.8H1667.6 M1650.3 658.9H1667.6 M1698.0 651.8H1715.3 M1699.0 658.9H1715.3 M1742.7 651.8H1760.0 M1743.7 658.9H1760.0 M1790.5 651.8H1807.7 M1791.5 658.9H1807.7 M1838.2 651.8H1855.5 M1839.2 658.9H1855.5 " stroke="#000" stroke-width="1.2" stroke-dasharray="1.3 2.2" opacity="0.45" fill="none"/>
<path d="M204.5 33V965 M1717.5 33V965" stroke="#df5f8b" stroke-width="1.3" fill="none"/>
<path d="M197 533.5H212 M1710 538.3H1724.5" stroke="#df5f8b" stroke-width="1.3" fill="none"/>
<circle cx="221.5" cy="53.1" r="14.5" fill="#2f88d6"/>
<circle cx="1699.2" cy="53" r="14.3" fill="#2f88d6"/>
<path d="M932 35H954.6L943.3 46.5z" fill="#f7931e"/>
<path d="M933 50.3H953V71.6H947.5L943.2 80L938.9 71.6H933z" fill="#262a38" stroke="#f7931e" stroke-width="2"/>
<path d="M1823 45.5H1872Q1875 45.5 1875 48.5V94.5Q1875 97.5 1872.5 95.3L1821 48Q1819 45.5 1823 45.5z" fill="#323a4e"/>
<circle cx="1863" cy="56.3" r="7.3" fill="none" stroke="#9aa8c8" stroke-width="3.4"/>
<path d="M1857.5 61.8L1848.6 71.2" stroke="#9aa8c8" stroke-width="3.6" stroke-linecap="round"/>
<path d="M720 14.2H1173 M767.3 6V23 M1130.4 6V23" stroke="#dce6f0" stroke-width="1.4" fill="none"/>
<path d="M722.5 6.3H720.5V22.7H722.5 M1171 6.3H1173.3V22.7H1171" stroke="#dce6f0" stroke-width="1.8" fill="none"/>
<path d="M937 1.5H954L945.5 7.4z" fill="#f7931e" stroke="#1a1a22" stroke-width="0.6"/>
<path d="M937.8 9.8H952.2V24.5H948.3L945 29L941.7 24.5H937.8z" fill="#262a38" stroke="#111" stroke-width="3"/>
<path d="M937.8 9.8H952.2V24.5H948.3L945 29L941.7 24.5H937.8z" fill="#262a38" stroke="#f7931e" stroke-width="1.5"/>
<path d="M7.1 516.3H40L53 530.9L40 545.5H7.1z" fill="#000" stroke="#9ccb1b" stroke-width="1.7"/>
<rect x="72" y="520" width="59" height="22.5" fill="#000"/>
<path d="M6 640H40L54 655.9L40 671.8H6z" fill="#d9608c"/>
<path d="M454.7 142.2V154.4L457.2 152.2L460.6 157.2L462.2 156.1L460.8 151.7L463.6 150.8z" fill="#000" stroke="#dfe8f4" stroke-width="1.1" stroke-linejoin="round"/>
<rect x="72" y="645" width="38" height="22" fill="#000"/>
<path d="M1755.8 1H1776L1772.7 6.3H1767.7V25.4H1761.3V6.3H1755.8z" fill="#ffffff"/>
<ellipse cx="1779.1" cy="16.45" rx="6.6" ry="6.7" fill="none" stroke="#ffffff" stroke-width="5.3"/>
<rect x="1773" y="15" width="15.5" height="3.7" fill="#ffffff"/>
<rect x="1782.6" y="18.8" width="7" height="2.6" fill="#313748"/>
<rect x="1790" y="1" width="5.4" height="24.4" fill="#ffffff"/>
<path d="M1797.5 19.5L1801.2 15L1807.3 25.4H1800.6z" fill="#ffffff"/>
<path d="M1789.6 25.9L1795.4 25.9L1808.8 6.6L1801.7 6.6z" fill="#313748"/>
<path d="M1790.2 25.4H1795L1807.9 7.1H1802.1z" fill="#19c3e0"/>
<path d="M1813.8 1V7.1H1816.7V12.5H1813.8V25.4H1808.8V7.1z" fill="#ffffff"/>
<path d="M1818.4 7.6H1824V11Q1825 7.1 1828 7.1V12.4Q1824.3 12.4 1824 16.5V25.4H1818.4z" fill="#ffffff"/>
<ellipse cx="1837.7" cy="16.45" rx="6.7" ry="6.65" fill="none" stroke="#ffffff" stroke-width="5.4"/>
<path d="M1849 25.4V7.6H1853.8V9.5Q1855.5 7.1 1858.5 7.1Q1865 7.1 1865 15V25.4H1860V16Q1860 12.3 1857.2 12.3Q1854 12.3 1854 16V25.4z" fill="#ffffff"/>
<rect x="1867.1" y="7.9" width="5.6" height="17.5" fill="#ffffff"/><circle cx="1869.9" cy="3.3" r="2.9" fill="#ffffff"/>
<path d="M1874.4 7.9H1880.6L1891.9 25.4H1885.7z M1885.6 7.9H1891.6L1880.3 25.4H1874.2z" fill="#ffffff"/>
</svg>
<div class="t " style="left:42.0px;top:3.4px;font-size:21px;line-height:21px;color:#dfe6f0;letter-spacing:-1px;">File</div>
<div class="t " style="left:191.0px;top:3.4px;font-size:21px;line-height:21px;color:#dfe6f0;letter-spacing:-0.3px;">Edit</div>
<div class="t " style="left:329.5px;top:3.4px;font-size:21px;line-height:21px;color:#dfe6f0;letter-spacing:0.75px;">Utility</div>
<div class="t " style="left:487.8px;top:3.4px;font-size:21px;line-height:21px;color:#dfe6f0;letter-spacing:-0.6px;">Help</div>
<div class="t" style="right:39.9px;top:140.7px;font-size:19.5px;line-height:19.5px;color:#e4629a;letter-spacing:-0.9px;word-spacing:1.8px;">21.8 V</div>
<div class="t" style="right:39.9px;top:257.2px;font-size:19.5px;line-height:19.5px;color:#e4629a;letter-spacing:-0.9px;word-spacing:1.8px;">16.8 V</div>
<div class="t" style="right:39.9px;top:373.7px;font-size:19.5px;line-height:19.5px;color:#e4629a;letter-spacing:-0.9px;word-spacing:1.8px;">11.8 V</div>
<div class="t" style="right:39.4px;top:490.2px;font-size:19.5px;line-height:19.5px;color:#e4629a;letter-spacing:-0.4px;word-spacing:1.8px;">6.80 V</div>
<div class="t" style="right:39.9px;top:606.7px;font-size:19.5px;line-height:19.5px;color:#e4629a;letter-spacing:-0.9px;word-spacing:1.8px;">1.80 V</div>
<div class="t" style="right:39.4px;top:723.2px;font-size:19.5px;line-height:19.5px;color:#e4629a;letter-spacing:-0.4px;word-spacing:1.8px;">-3.20 V</div>
<div class="t" style="right:39.4px;top:839.7px;font-size:19.5px;line-height:19.5px;color:#e4629a;letter-spacing:-0.4px;word-spacing:1.8px;">-8.20 V</div>
<div class="abs" style="left:26.0px;top:100.0px;width:177.5px;height:47.8px;background:#323a4e;border-radius:8px;"></div>
<div class="t " style="left:33.0px;top:101.7px;font-size:20px;line-height:20px;color:#dfe6f0;">t:</div>
<div class="t " style="left:71.0px;top:101.7px;font-size:20px;line-height:20px;color:#dfe6f0;letter-spacing:-0.1px;">-39.20 ms</div>
<div class="t " style="left:33.0px;top:125.7px;font-size:20px;line-height:20px;color:#dfe6f0;">V:</div>
<div class="t " style="left:70.8px;top:125.7px;font-size:20px;line-height:20px;color:#dfe6f0;letter-spacing:0.15px;">5.300 V</div>
<div class="abs" style="left:767.3px;top:100.0px;width:386.5px;height:47.3px;background:#323a4e;border-radius:8px;"></div>
<div class="t " style="left:774.0px;top:101.7px;font-size:20px;line-height:20px;color:#dfe6f0;">Δt:</div>
<div class="t " style="left:812.0px;top:101.7px;font-size:20px;line-height:20px;color:#dfe6f0;">80.30 ms</div>
<div class="t " style="left:941.3px;top:101.7px;font-size:20px;line-height:20px;color:#dfe6f0;letter-spacing:0.9px;">1/Δt:</div>
<div class="t " style="left:1014.8px;top:101.7px;font-size:20px;line-height:20px;color:#dfe6f0;letter-spacing:-0.7px;">12.45 Hz</div>
<div class="t " style="left:774.0px;top:125.7px;font-size:20px;line-height:20px;color:#dfe6f0;">ΔV:</div>
<div class="t " style="left:813.0px;top:125.7px;font-size:20px;line-height:20px;color:#dfe6f0;letter-spacing:0.4px;">200.0 mV</div>
<div class="abs" style="left:1709.3px;top:100.0px;width:177.3px;height:47.7px;background:#323a4e;border-radius:8px;"></div>
<div class="t " style="left:1716.0px;top:101.7px;font-size:20px;line-height:20px;color:#dfe6f0;">t:</div>
<div class="t " style="left:1753.6px;top:101.7px;font-size:20px;line-height:20px;color:#dfe6f0;letter-spacing:-1px;">41.10 ms</div>
<div class="t " style="left:1716.0px;top:125.7px;font-size:20px;line-height:20px;color:#dfe6f0;">V:</div>
<div class="t " style="left:1753.6px;top:125.7px;font-size:20px;line-height:20px;color:#dfe6f0;letter-spacing:-0.7px;">5.100 V</div>
<div class="t" style="left:207.5px;top:39.9px;width:29px;text-align:center;font-size:25px;line-height:25px;font-weight:bold;color:#fff;">A</div>
<div class="t" style="left:1685.2px;top:39.8px;width:29px;text-align:center;font-size:25px;line-height:25px;font-weight:bold;color:#fff;">B</div>
<div class="t" style="left:932.25px;top:51.8px;width:22px;text-align:center;font-size:19px;line-height:19px;font-weight:bold;color:#f7931e;">T</div>
<div class="t" style="left:937.2px;top:11.1px;width:16px;text-align:center;font-size:12px;line-height:12px;font-weight:bold;color:#f7931e;">T</div>
<div class="t " style="left:11.5px;top:521.0px;font-size:19.5px;line-height:19.5px;color:#9ccb1b;transform:scaleX(0.92);transform-origin:0 0;">C4</div>
<div class="t " style="left:73.0px;top:521.0px;font-size:19.5px;line-height:19.5px;color:#9ccb1b;transform:scaleX(0.95);transform-origin:0 0;">I_OUT</div>
<div class="t " style="left:12.5px;top:645.5px;font-size:19.5px;line-height:19.5px;color:#000;transform:scaleX(0.82);transform-origin:0 0;">C3</div>
<div class="t " style="left:73.5px;top:646.0px;font-size:19.5px;line-height:19.5px;color:#e4629a;transform:scaleX(0.8);transform-origin:0 0;">ENC</div>
<div class="abs" style="left:1901.9px;top:491.95px;width:7.3px;height:7.3px;border-radius:2.6px;background:#c6d5f2;"></div>
<div class="abs" style="left:1901.9px;top:503.95px;width:7.3px;height:7.3px;border-radius:2.6px;background:#c6d5f2;"></div>
<div class="abs" style="left:1901.9px;top:515.85px;width:7.3px;height:7.3px;border-radius:2.6px;background:#c6d5f2;"></div>
<div class="abs" style="left:5.5px;top:972.2px;width:131.2px;height:101.4px;background:#9fb0d1;border:1px solid #6f7378;border-radius:7px;overflow:hidden;"><div style="position:absolute;left:0;top:0;right:0;height:25.8px;background:#d9608c;"></div></div>
<div class="t " style="left:12.8px;top:975.9px;font-size:20px;line-height:20px;color:#0c0c0c;letter-spacing:-0.8px;">Ch 3</div>
<div class="t " style="left:15.5px;top:1002.1px;font-size:20px;line-height:20px;color:#0c0c0c;letter-spacing:0.9px;">5.00 V/div</div>
<div class="t " style="left:15.5px;top:1050.1px;font-size:20px;line-height:20px;color:#0c0c0c;letter-spacing:0.3px;">500 MHz</div>
<div class="abs" style="left:146.6px;top:972.2px;width:131.1px;height:101.4px;background:#9fb0d1;border:1px solid #6f7378;border-radius:7px;overflow:hidden;"><div style="position:absolute;left:0;top:0;right:0;height:25.8px;background:#505a4e;"></div></div>
<div class="t " style="left:153.7px;top:975.9px;font-size:20px;line-height:20px;color:#8cc814;letter-spacing:-0.8px;">Ch 4</div>
<div class="t " style="left:156.5px;top:1002.1px;font-size:20px;line-height:20px;color:#0c0c0c;letter-spacing:0.7px;">100 mA/div</div>
<div class="t " style="left:156.5px;top:1025.9px;font-size:20px;line-height:20px;color:#0c0c0c;">1 MΩ</div>
<div class="t " style="left:157.5px;top:1050.1px;font-size:20px;line-height:20px;color:#0c0c0c;letter-spacing:0.2px;">20 MHz</div>
<div class="t " style="left:235.0px;top:1053.8px;font-size:12px;line-height:12px;color:#0c0c0c;">B<sub style="font-size:11px;vertical-align:-3px">w</sub></div>
<svg width="35" height="24" style="left:10px;top:1024px;" viewBox="0 0 35 24"><path d="M8.5 12.4C8.5 7.2 11.8 5.6 15.6 5.6C19.4 5.6 22.5 7.2 22.5 12.6" fill="none" stroke="#0c0c0c" stroke-width="1.5"/><circle cx="15.6" cy="9.8" r="3.3" fill="none" stroke="#0c0c0c" stroke-width="1.3"/><path d="M6.9 12.4H10.2V17L8.55 18.9L6.9 17z" fill="#eef0ff" stroke="#0c0c0c" stroke-width="1.2"/><rect x="20.2" y="12.7" width="4.5" height="6.8" fill="#eef0ff" stroke="#0c0c0c" stroke-width="1.2"/></svg><div class="abs" style="left:1039.0px;top:972.5px;width:57.8px;height:101px;border:1px solid #6d706e;border-radius:7px;"></div>
<div class="abs" style="left:1048.0px;top:984.0px;width:42.0px;height:3.0px;background:#c8b42a;border-radius:0px;"></div>
<div class="t" style="left:1039px;top:1014.1px;width:60px;text-align:center;font-size:20px;line-height:20px;color:#dfe6f0;">1</div>
<div class="abs" style="left:1106.5px;top:972.5px;width:57.4px;height:101px;border:1px solid #6d706e;border-radius:7px;"></div>
<div class="abs" style="left:1115.0px;top:984.0px;width:42.0px;height:3.0px;background:#18c6e6;border-radius:0px;"></div>
<div class="t" style="left:1106.5px;top:1014.1px;width:60px;text-align:center;font-size:20px;line-height:20px;color:#dfe6f0;">2</div>
<div class="abs" style="left:1173.0px;top:972.5px;width:57.7px;height:101px;border:1px solid #6d706e;border-radius:7px;"></div>
<div class="t" style="left:1174px;top:989.9px;width:60px;text-align:center;font-size:20px;line-height:20px;color:#dfe6f0;letter-spacing:1.2px;">Math</div>
<div class="t" style="left:1174px;top:1014.1px;width:60px;text-align:center;font-size:20px;line-height:20px;color:#dfe6f0;letter-spacing:0px;">Ref</div>
<div class="t" style="left:1174px;top:1037.5px;width:60px;text-align:center;font-size:20px;line-height:20px;color:#dfe6f0;letter-spacing:-1px;">Bus</div>
<div class="abs" style="left:1245.5px;top:972.2px;width:141.3px;height:101.4px;background:#9fb0d1;border:1px solid #6f7378;border-radius:7px;overflow:hidden;"><div style="position:absolute;left:0;top:0;right:0;height:25.8px;background:#40506c;"></div></div>
<div class="t " style="left:1253.0px;top:975.9px;font-size:20px;line-height:20px;color:#dfe6f0;letter-spacing:0.6px;">Horizontal</div>
<div class="t " style="left:1256.0px;top:1000.9px;font-size:20px;line-height:20px;color:#0c0c0c;letter-spacing:0.1px;">10.0 ms/div</div>
<div class="t " style="left:1256.0px;top:1024.6px;font-size:20px;line-height:20px;color:#0c0c0c;letter-spacing:-0.35px;">SR:1.00 MS/s</div>
<div class="t " style="left:1256.0px;top:1048.6px;font-size:20px;line-height:20px;color:#0c0c0c;letter-spacing:-0.25px;">RL: 100 kpts</div>
<div class="abs" style="left:1401.6px;top:972.2px;width:141.0px;height:101.4px;background:#9fb0d1;border:1px solid #6f7378;border-radius:7px;overflow:hidden;"><div style="position:absolute;left:0;top:0;right:0;height:25.8px;background:#40506c;"></div></div>
<div class="t " style="left:1410.0px;top:975.9px;font-size:20px;line-height:20px;color:#dfe6f0;letter-spacing:0.3px;">Trigger</div>
<div class="abs" style="left:1500.4px;top:976.6px;width:33.6px;height:18.7px;background:#b8b030;border-radius:3px;border:1px solid #6d6a30;box-sizing:border-box;"></div>
<div class="t" style="left:1500.4px;top:975.7px;width:34px;text-align:center;font-size:20px;line-height:20px;color:#0c0c0c;">1</div>
<svg width="30" height="20" style="left:1410px;top:1003px;" viewBox="0 0 30 20"><path d="M2.9 16.6H9.2L21.7 2.8H25" fill="none" stroke="#0c0c0c" stroke-width="2"/></svg>
<div class="t " style="left:1470.5px;top:1001.9px;font-size:20px;line-height:20px;color:#0c0c0c;letter-spacing:0.6px;">2.44 V</div>
<div class="abs" style="left:1557.6px;top:972.2px;width:141.0px;height:101.4px;background:#9fb0d1;border:1px solid #6f7378;border-radius:7px;overflow:hidden;"><div style="position:absolute;left:0;top:0;right:0;height:25.8px;background:#40506c;"></div></div>
<div class="t " style="left:1566.0px;top:975.9px;font-size:20px;line-height:20px;color:#dfe6f0;letter-spacing:0.6px;">Acquisition</div>
<div class="t " style="left:1568.5px;top:1001.1px;font-size:20px;line-height:20px;color:#0c0c0c;letter-spacing:-0.7px;">Sample</div>
<div class="t " style="left:1568.5px;top:1025.1px;font-size:20px;line-height:20px;color:#0c0c0c;letter-spacing:0.35px;">63 Acqs</div>
<div class="abs" style="left:1713.5px;top:972.5px;width:56.8px;height:101px;border:1px solid #6d706e;border-radius:7px;"></div>
<div class="abs" style="left:1722.0px;top:984.3px;width:42.0px;height:2.7px;background:#f07828;border-radius:0px;"></div>
<div class="t" style="left:1713.5px;top:1014.1px;width:60px;text-align:center;font-size:20px;line-height:20px;color:#dfe6f0;letter-spacing:-1.5px;">RF</div>
<div class="abs" style="left:1785.3px;top:972.4px;width:129.5px;height:47.8px;background:#c63434;border-radius:7px;border:1px solid #72807c;box-sizing:border-box;"></div>
<div class="t" style="left:1785.3px;top:986.7px;width:129px;text-align:center;font-size:20px;line-height:20px;color:#f0e8ec;letter-spacing:0.5px;">Preview</div>
<div class="abs" style="left:1785.3px;top:1027.6px;width:129.5px;height:47.8px;background:#9fb0d1;border-radius:7px;border:1px solid #6f7378;box-sizing:border-box;"></div>
<div class="t" style="left:1787.5px;top:1028.7px;width:129px;text-align:center;font-size:20px;line-height:20px;color:#0c0c0c;letter-spacing:0.4px;">22 Mar 2024</div>
<div class="t" style="left:1786.3px;top:1052.1px;width:129px;text-align:center;font-size:20px;line-height:20px;color:#0c0c0c;letter-spacing:-0.8px;">03:46:14</div>

</body></html>
